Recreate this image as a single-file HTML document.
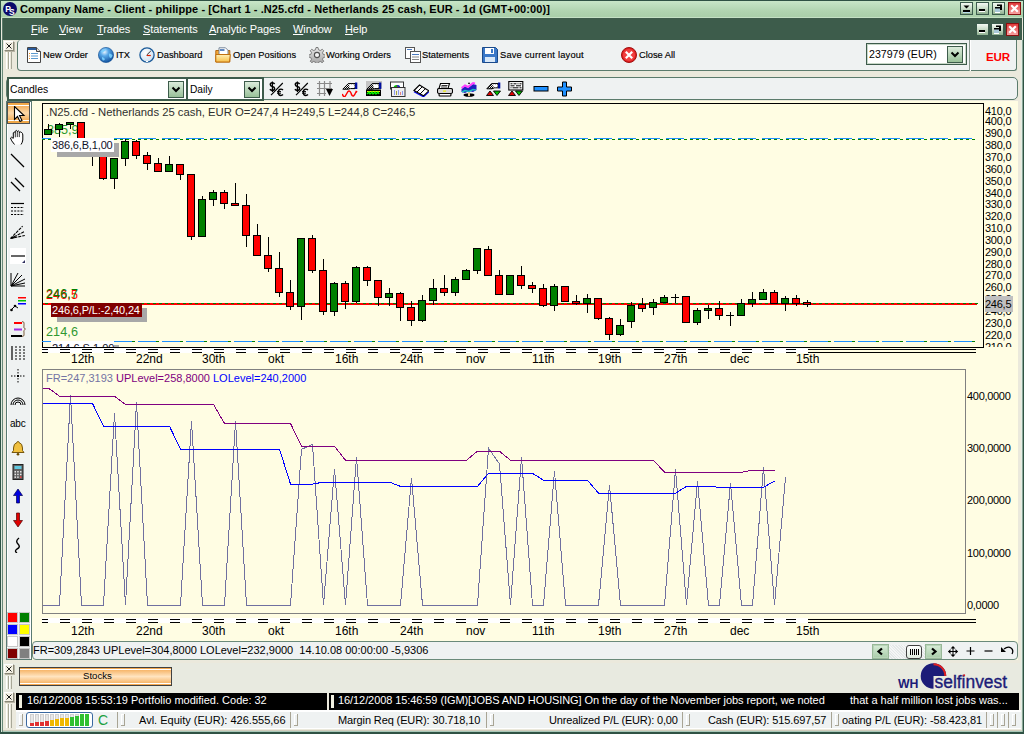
<!DOCTYPE html>
<html><head><meta charset="utf-8">
<style>
*{margin:0;padding:0;box-sizing:border-box}
html,body{width:1024px;height:734px;overflow:hidden;background:#ebe9dc;font-family:'Liberation Sans', sans-serif;color:#000}
.a{position:absolute}
.pl{position:absolute;left:985px;font-size:11px;line-height:14px;letter-spacing:-0.25px}
.pl2{position:absolute;left:967px;font-size:11px;line-height:14px;letter-spacing:-0.3px}
.xl{position:absolute;font-size:12px;line-height:12px}
.mn{position:absolute;top:22px;letter-spacing:-0.1px;color:#fff;font-size:11px;line-height:14px}
.mn u{text-decoration:underline}
.tb{position:absolute;top:48.6px;font-size:9.3px;line-height:13px;white-space:nowrap;-webkit-text-stroke:0.15px #000}
.t11{position:absolute;font-size:11px;line-height:14px;white-space:nowrap}
</style></head><body>
<!-- frame -->
<div class="a" style="left:0;top:0;width:1024px;height:1px;background:#2f5244"></div>
<div class="a" style="left:0;top:0;width:1px;height:734px;background:#2f5244"></div>
<div class="a" style="left:1px;top:40px;width:1px;height:694px;background:#dce8dc"></div>
<div class="a" style="left:2px;top:40px;width:1px;height:694px;background:#6a8a7a"></div>
<div class="a" style="left:1023px;top:0;width:1px;height:734px;background:#2f5244"></div>
<div class="a" style="left:1022px;top:40px;width:1px;height:694px;background:#8aa898"></div>
<div class="a" style="left:1021px;top:40px;width:1px;height:694px;background:#e4ece4"></div>
<div class="a" style="left:0;top:732px;width:1024px;height:2px;background:#2f5244"></div>
<div class="a" style="left:3px;top:731px;width:1019px;height:1px;background:#a8c8b8"></div>
<div class="a" style="left:3px;top:730px;width:1019px;height:1px;background:#d0ccbc"></div>
<!-- title -->
<div class="a" style="left:1px;top:1px;width:1022px;height:17px;background:linear-gradient(#c8e6c8,#b0d4b0 60%,#a8cea8)"></div>
<div class="a" style="left:1px;top:17px;width:1022px;height:1px;background:#c4e0c4"></div>
<div class="a" style="left:3px;top:2px;width:14px;height:14px;border-radius:50%;background:#0a0a6a"></div>
<svg class="a" style="left:3px;top:2px" width="14" height="14"><text x="2.2" y="9.5" font-family="Liberation Sans" font-weight="bold" font-size="8.5" fill="#fff">P</text><text x="6" y="12.5" font-family="Liberation Sans" font-weight="bold" font-size="8.5" fill="#fff">S</text></svg>
<div class="a" style="left:20px;top:3px;font:bold 11px 'Liberation Sans', sans-serif;line-height:13px;letter-spacing:0.09px;white-space:nowrap">Company Name - Client - philippe - [Chart 1 - .N25.cfd - Netherlands 25 cash, EUR - 1d (GMT+00:00)]</div>
<div class="a" style="left:960px;top:2px;width:13px;height:13px;background:linear-gradient(#f4faf4,#c8dcc8 50%,#8fb08f);border:1px solid #3b5b4d"><svg width="11" height="11" viewBox="0 0 11 11" style="position:absolute;left:0;top:0"><path d="M2.5,2.5 h6 l-3,3z" fill="#000"/><rect x="2" y="7" width="7" height="2" fill="#000"/><rect x="2" y="9" width="7" height="1" fill="#bde"/></svg></div><div class="a" style="left:976px;top:2px;width:13px;height:13px;background:linear-gradient(#f4faf4,#c8dcc8 50%,#8fb08f);border:1px solid #3b5b4d"><svg width="11" height="11" viewBox="0 0 11 11" style="position:absolute;left:0;top:0"><rect x="2" y="6" width="6" height="2" fill="#000"/><rect x="2" y="8" width="6" height="1" fill="#fff"/></svg></div><div class="a" style="left:992px;top:2px;width:13px;height:13px;background:linear-gradient(#f4faf4,#c8dcc8 50%,#8fb08f);border:1px solid #3b5b4d"><svg width="11" height="11" viewBox="0 0 11 11" style="position:absolute;left:0;top:0"><rect x="2" y="4" width="5" height="5" fill="#a8c8d8" stroke="#000" stroke-width="0"/><rect x="2" y="4" width="5" height="1.5" fill="#000"/><rect x="4" y="1.5" width="5" height="1.5" fill="#000"/><rect x="7" y="3" width="2" height="4" fill="#000"/><rect x="2" y="9" width="5" height="1" fill="#fff"/></svg></div><div class="a" style="left:1008px;top:2px;width:13px;height:13px;background:linear-gradient(#e03838,#f07878 60%,#f8a0a0);border:1px solid #8a1010"><svg width="11" height="11" viewBox="0 0 11 11" style="position:absolute;left:0;top:0"><path d="M2.2,2.2 L8.8,8.8 M8.8,2.2 L2.2,8.8" stroke="#fff" stroke-width="2.2"/></svg></div>
<!-- menu -->
<div class="a" style="left:2px;top:18px;width:1020px;height:22px;background:#3d5c4b;border-left:1px solid #5a7a6a"></div>
<span class="mn" style="left:31px"><u>F</u>ile</span><span class="mn" style="left:59px"><u>V</u>iew</span><span class="mn" style="left:97px"><u>T</u>rades</span><span class="mn" style="left:143px"><u>S</u>tatements</span><span class="mn" style="left:209px"><u>A</u>nalytic Pages</span><span class="mn" style="left:293px"><u>W</u>indow</span><span class="mn" style="left:345px"><u>H</u>elp</span>
<div class="a" style="left:976px;top:23px;width:13px;height:13px;background:linear-gradient(#f4faf4,#c8dcc8 50%,#8fb08f);border:1px solid #3b5b4d"><svg width="11" height="11" viewBox="0 0 11 11" style="position:absolute;left:0;top:0"><rect x="2" y="6" width="6" height="2" fill="#000"/><rect x="2" y="8" width="6" height="1" fill="#fff"/></svg></div><div class="a" style="left:991px;top:23px;width:13px;height:13px;background:linear-gradient(#f4faf4,#c8dcc8 50%,#8fb08f);border:1px solid #3b5b4d"><svg width="11" height="11" viewBox="0 0 11 11" style="position:absolute;left:0;top:0"><rect x="2" y="4" width="5" height="5" fill="#a8c8d8" stroke="#000" stroke-width="0"/><rect x="2" y="4" width="5" height="1.5" fill="#000"/><rect x="4" y="1.5" width="5" height="1.5" fill="#000"/><rect x="7" y="3" width="2" height="4" fill="#000"/><rect x="2" y="9" width="5" height="1" fill="#fff"/></svg></div><div class="a" style="left:1006px;top:23px;width:13px;height:13px;background:linear-gradient(#e03838,#f07878 60%,#f8a0a0);border:1px solid #8a1010"><svg width="11" height="11" viewBox="0 0 11 11" style="position:absolute;left:0;top:0"><path d="M2.2,2.2 L8.8,8.8 M8.8,2.2 L2.2,8.8" stroke="#fff" stroke-width="2.2"/></svg></div>
<!-- main toolbar -->
<div class="a" style="left:4px;top:41px;width:10px;height:10px;background:#f4f1e4;border:1px solid;border-color:#fff #8a8878 #8a8878 #fff;box-shadow:1px 1px #b8b4a4"><svg width="8" height="8" style="position:absolute;left:0;top:0"><path d="M1.5,1.5 L6.5,6.5 M6.5,1.5 L1.5,6.5" stroke="#000" stroke-width="0.9"/></svg></div><div class="a" style="left:6px;top:52px;width:3px;height:17px;border-left:1px solid #fff;border-right:1px solid #a8a898"></div><div class="a" style="left:9px;top:52px;width:3px;height:17px;border-left:1px solid #fff;border-right:1px solid #a8a898"></div>
<div class="a" style="left:17px;top:40px;width:953px;height:31px;background:#eff2f2;border:1px solid #5b7b6c;border-top:0;border-radius:4px 0 0 4px"></div>
<div class="a" style="left:970px;top:40px;width:47px;height:31px;background:#eff2f2;border:1px solid #5b7b6c;border-top:0;border-left:0;border-radius:0 0 3px 0"></div>
<div class="a" style="left:969px;top:40px;width:2px;height:31px;background:#fff;border-left:1px solid #8a9a90"></div>
<svg class="a" style="left:26px;top:47px" width="16" height="16" viewBox="0 0 16 16"><path d="M1.5,0.5 h9 l4,4 v11 h-13 z" fill="#fff" stroke="#444"/>
<path d="M10.5,0.5 v4 h4" fill="#ddd" stroke="#444"/>
<rect x="2" y="1" width="8" height="2" fill="#2a5a9a"/>
<rect x="5" y="6" width="7" height="1" fill="#5a9ad0"/><rect x="5" y="8.5" width="7" height="1" fill="#5a9ad0"/>
<rect x="5" y="11" width="7" height="1" fill="#5a9ad0"/><rect x="3" y="6" width="1" height="1" fill="#f09020"/>
<rect x="3" y="8.5" width="1" height="1" fill="#f09020"/><rect x="3" y="11" width="1" height="1" fill="#f09020"/></svg><svg class="a" style="left:98px;top:47px" width="16" height="16" viewBox="0 0 16 16"><defs><radialGradient id="gl" cx="0.4" cy="0.3" r="0.75"><stop offset="0" stop-color="#e8f4ff"/><stop offset="0.35" stop-color="#58a8e8"/><stop offset="1" stop-color="#0a4a98"/></radialGradient></defs><circle cx="8" cy="8" r="7.6" fill="url(#gl)" stroke="#0a4a90" stroke-width="0.6"/><path d="M3,4.5 q2,-2.5 5,-2 q-1,2 -3,2.5 q-1,1.5 -2,-0.5z M11,6.5 q2.5,0 3.5,2 q-0.5,2.5 -2.5,2.5 q-1.5,-2 -1,-4.5z M4,10 q2,0.5 3,2 q-0.5,1.5 -2,1.5 q-1.5,-1.5 -1,-3.5z" fill="#7ad0ff" opacity="0.9"/></svg><svg class="a" style="left:139px;top:47px" width="16" height="16" viewBox="0 0 16 16"><defs><radialGradient id="dg" cx="0.4" cy="0.35" r="0.7"><stop offset="0" stop-color="#ffffff"/><stop offset="1" stop-color="#c8ddf0"/></radialGradient></defs><circle cx="8" cy="8" r="7.1" fill="url(#dg)" stroke="#1a5a98" stroke-width="1.3"/><path d="M7.7,8 L11.8,4" stroke="#303030" stroke-width="1"/><path d="M7.7,8.5 H11.8" stroke="#e02000" stroke-width="1.2"/><rect x="7" y="14" width="2" height="1" fill="#fff"/></svg><svg class="a" style="left:215px;top:47px" width="16" height="16" viewBox="0 0 16 16"><defs><linearGradient id="fg" x1="0" y1="0" x2="0" y2="1"><stop offset="0" stop-color="#fff0b8"/><stop offset="1" stop-color="#f8c048"/></linearGradient></defs><path d="M0.8,3.5 h4 l1.5,-1.5 h4 v1.5 h4.5 v11.5 h-14 z" fill="#f4a838" stroke="#b86a10" stroke-width="1"/><path d="M4,0.8 h6.5 l2.5,2.5 v5.5 h-9 z" fill="#fff" stroke="#6a7a90" stroke-width="0.9"/><rect x="5" y="2.2" width="4.5" height="1.6" fill="#3a6ab0"/><path d="M0.8,7.5 h14.5 l-0.8,7.5 h-13.7 z" fill="url(#fg)" stroke="#c07010" stroke-width="1"/></svg><svg class="a" style="left:309px;top:47px" width="16" height="16" viewBox="0 0 16 16"><defs><linearGradient id="gg" x1="0" y1="0" x2="0" y2="1"><stop offset="0" stop-color="#e8e8e8"/><stop offset="1" stop-color="#a0a0a0"/></linearGradient></defs><g fill="url(#gg)" stroke="#707070" stroke-width="0.9"><path d="M7,0.5h2l0.5,2.2 1.8,0.8 2-1.2 1.4,1.4 -1.2,2 0.8,1.8 2.2,0.5v2l-2.2,0.5 -0.8,1.8 1.2,2 -1.4,1.4 -2,-1.2 -1.8,0.8 -0.5,2.2h-2l-0.5,-2.2 -1.8,-0.8 -2,1.2 -1.4,-1.4 1.2,-2 -0.8,-1.8 -2.2,-0.5v-2l2.2,-0.5 0.8,-1.8 -1.2,-2 1.4,-1.4 2,1.2 1.8,-0.8z"/></g><circle cx="8" cy="8" r="2.6" fill="#f4f4f4" stroke="#505050" stroke-width="1.1"/></svg><svg class="a" style="left:405px;top:47px" width="16" height="16" viewBox="0 0 16 16"><rect x="0.5" y="0.5" width="9" height="11" fill="#fff" stroke="#555"/><rect x="5.5" y="4.5" width="10" height="11" fill="#fff" stroke="#555"/>
<rect x="2" y="2" width="5" height="1" fill="#4a7ac0"/><rect x="7" y="7" width="7" height="1" fill="#4a7ac0"/><rect x="7" y="9.5" width="7" height="1" fill="#888"/><rect x="7" y="12" width="7" height="1" fill="#888"/></svg><svg class="a" style="left:482px;top:47px" width="16" height="16" viewBox="0 0 16 16"><path d="M0.5,0.5 h13 l2,2 v13 h-15 z" fill="#3a78c8" stroke="#1a4a8a"/><rect x="3" y="1" width="9" height="6" fill="#fff"/><rect x="9" y="2" width="2" height="4" fill="#3a78c8"/><rect x="3" y="10" width="10" height="5" fill="#d8e8f8"/></svg><svg class="a" style="left:621px;top:47px" width="16" height="16" viewBox="0 0 16 16"><circle cx="8" cy="8" r="7.5" fill="#e02020" stroke="#a01010"/><circle cx="8" cy="8" r="6" fill="#f04040"/><path d="M4.8,4.8 L11.2,11.2 M11.2,4.8 L4.8,11.2" stroke="#fff" stroke-width="2.2"/></svg>
<div class="tb" style="left:43px">New Order</div>
<div class="tb" style="left:116px;letter-spacing:-0.3px">ITX</div>
<div class="tb" style="left:157px">Dashboard</div>
<div class="tb" style="left:233px">Open Positions</div>
<div class="tb" style="left:326px">Working Orders</div>
<div class="tb" style="left:422px">Statements</div>
<div class="tb" style="left:500px;letter-spacing:0.2px">Save current layout</div>
<div class="tb" style="left:639px">Close All</div>
<div class="a" style="left:866px;top:43px;width:101px;height:22px;border:1px solid #3d5b4b;box-shadow:inset 0 0 0 1px #c8d8c8;background:#fff"></div>
<div class="t11" style="left:869px;top:47px;font-size:10.6px">237979 (EUR)</div>
<div class="a" style="left:947px;top:46px;width:16px;height:17px;background:linear-gradient(#dcecdc,#98c098);border:1px solid #3d5b4b"><svg width="14" height="15" style="position:absolute;left:0;top:0"><path d="M3.5,5.5 L7,9 L10.5,5.5" fill="none" stroke="#000" stroke-width="2"/></svg></div>
<div class="a" style="left:986px;top:50px;font:bold 11.6px 'Liberation Sans', sans-serif;line-height:13px;color:#f00;letter-spacing:-0.2px">EUR</div>
<!-- chart toolbar -->
<div class="a" style="left:6px;top:77px;width:1012px;height:23px;background:#eff2f2;border:1px solid #5b7b6c;border-radius:5px"></div>
<div class="a" style="left:7px;top:77px;width:181px;height:24px;border:2px solid #3d5b4b;background:#fff"></div>
<div class="a" style="left:186px;top:77px;width:78px;height:24px;border:2px solid #3d5b4b;background:#fff"></div>
<div class="t11" style="left:10px;top:83px;font-size:10.4px">Candles</div>
<div class="t11" style="left:190px;top:83px;font-size:10.2px">Daily</div>
<div class="a" style="left:168px;top:81px;width:16px;height:17px;background:linear-gradient(#dcecdc,#98c098);border:1px solid #3d5b4b"><svg width="14" height="15" style="position:absolute;left:0;top:0"><path d="M3.5,5.5 L7,9 L10.5,5.5" fill="none" stroke="#000" stroke-width="2"/></svg></div><div class="a" style="left:244px;top:81px;width:16px;height:17px;background:linear-gradient(#dcecdc,#98c098);border:1px solid #3d5b4b"><svg width="14" height="15" style="position:absolute;left:0;top:0"><path d="M3.5,5.5 L7,9 L10.5,5.5" fill="none" stroke="#000" stroke-width="2"/></svg></div>
<svg class="a" style="left:269px;top:81px" width="16" height="16" viewBox="0 0 16 16"><path d="M5.6,3 q-0.8,-1.2 -2.3,-1.2 q-2,0 -2,1.8 q0,1.5 2.1,1.9 q2.2,0.4 2.2,2 q0,1.9 -2.2,1.9 q-1.6,0 -2.5,-1.1" fill="none" stroke="#000" stroke-width="1.5"/><path d="M3.4,0.5 v10.5" stroke="#000" stroke-width="1.2"/><path d="M2,14.2 L13.8,2" stroke="#000" stroke-width="1.1"/><path d="M14,9 q-0.9,-0.9 -2.1,-0.9 q-2.6,0 -2.6,3.2 q0,3.2 2.6,3.2 q1.2,0 2.1,-0.9" fill="none" stroke="#000" stroke-width="1.4"/><path d="M8,10.6 h4 M8,12.2 h4" stroke="#000" stroke-width="1"/></svg><svg class="a" style="left:294px;top:81px" width="16" height="16" viewBox="0 0 16 16"><path d="M5.6,3 q-0.8,-1.2 -2.3,-1.2 q-2,0 -2,1.8 q0,1.5 2.1,1.9 q2.2,0.4 2.2,2 q0,1.9 -2.2,1.9 q-1.6,0 -2.5,-1.1" fill="none" stroke="#000" stroke-width="1.5"/><path d="M3.4,0.5 v10.5" stroke="#000" stroke-width="1.2"/><path d="M2,14.2 L13.8,2" stroke="#000" stroke-width="1.1"/><path d="M14,9 q-0.9,-0.9 -2.1,-0.9 q-2.6,0 -2.6,3.2 q0,3.2 2.6,3.2 q1.2,0 2.1,-0.9" fill="none" stroke="#000" stroke-width="1.4"/><path d="M8,10.6 h4 M8,12.2 h4" stroke="#000" stroke-width="1"/></svg><svg class="a" style="left:317px;top:81px" width="16" height="16" viewBox="0 0 16 16"><path d="M2.5,0v15 M7.5,0v15 M13,0v9 M0,2.5h15 M0,7.5h15 M0,12.5h9" stroke="#8a8a8a" stroke-width="1.2"/><path d="M9,8 h7 l-3.5,7 z" fill="#000"/></svg><svg class="a" style="left:342px;top:81px" width="16" height="16" viewBox="0 0 16 16"><defs><pattern id="chk" width="2" height="2" patternUnits="userSpaceOnUse"><rect width="1" height="1" fill="#000"/><rect x="1" y="1" width="1" height="1" fill="#000"/></pattern></defs><path d="M0.8,8.2 L6.3,2.6 H13 V7.6 H8.5 L6,8.2 Z" fill="url(#chk)" stroke="#000" stroke-width="1"/><path d="M6.5,3.2 H12.5 V7 H8 Z" fill="#fff"/><rect x="13" y="1.5" width="2.3" height="6.5" fill="#0010a0"/><path d="M0.3,13 Q1.5,16.5 3,15.5 Q4.5,13 6,10.5 Q7.5,9 9,12 Q10,15.5 11.5,15 Q13,13.5 14.2,10.5 L15.2,11" fill="none" stroke="#f00" stroke-width="1.4"/></svg><svg class="a" style="left:366px;top:81px" width="16" height="16" viewBox="0 0 16 16"><rect x="0" y="0" width="16" height="7.5" fill="#c4c4c4"/><path d="M0.8,8.2 L6.3,2.6 H13 V7.6 H8.5 L6,8.2 Z" fill="url(#chk)" stroke="#000" stroke-width="1"/><path d="M6.5,3.2 H12.5 V7 H8 Z" fill="#fff"/><rect x="13" y="1.5" width="2.3" height="6.5" fill="#0010a0"/><rect x="0" y="8.5" width="15" height="6.5" fill="#000"/><path d="M1,10.5 h13" stroke="#f0f000" stroke-width="1"/><path d="M1,13 l2,-2 l1,2 l2,-2 l1,2 l2,-2 l1,2 l2,-2 l1,2" fill="none" stroke="#00ff00" stroke-width="1.3"/></svg><svg class="a" style="left:390px;top:81px" width="16" height="16" viewBox="0 0 16 16"><rect x="0.5" y="1" width="13" height="7" fill="#fff" stroke="#333" stroke-width="1"/><path d="M3.5,7.5 a3.4,3.4 0 0,1 6.8,0 z" fill="#00c000"/><path d="M6.9,4.1 a3.4,3.4 0 0,1 3.4,3.4 h-3.4z" fill="#2020e0"/><path d="M6.9,4.1 v3.4 h1.5 z" fill="#e02020"/><rect x="1.5" y="6.5" width="13.5" height="9" fill="#eee" stroke="#333" stroke-width="1"/><rect x="4" y="9" width="1" height="5" fill="#8a9af0"/><rect x="6" y="10" width="1" height="4" fill="#a0a040"/><rect x="8" y="9" width="1" height="5" fill="#8a9af0"/><rect x="10" y="11" width="1" height="3" fill="#e08080"/><rect x="12" y="10" width="1" height="4" fill="#8a9af0"/></svg><svg class="a" style="left:413px;top:81px" width="16" height="16" viewBox="0 0 16 16"><path d="M1,10.8 L10.5,15.8 L15.8,10.8" fill="none" stroke="#0000ff" stroke-width="1.2"/><path d="M1,9.5 L6.5,4 L15.8,9.8 L10.5,14.8 Z" fill="#fff" stroke="#000" stroke-width="1.1"/><path d="M3.8,11.2 L9.2,5.8 M7,13 L12.5,7.6" stroke="#000" stroke-width="1"/></svg><svg class="a" style="left:437px;top:81px" width="16" height="16" viewBox="0 0 16 16"><path d="M3.5,2.5 h9 l-1.5,5 h-9 z" fill="#fff" stroke="#000" stroke-width="1.1"/><path d="M4.5,4.5 h6 M4,6 h6" stroke="#000" stroke-width="0.8"/><rect x="0.5" y="7.5" width="15" height="5" rx="1.5" fill="#d8d8d8" stroke="#000" stroke-width="1.1"/><rect x="6" y="9.5" width="3" height="1.2" fill="#f0f000"/><rect x="2" y="12.5" width="12" height="2.5" rx="1" fill="#fff" stroke="#000" stroke-width="1.1"/></svg><svg class="a" style="left:461px;top:81px" width="16" height="16" viewBox="0 0 16 16"><path d="M8,1 l-1,2 h2z" fill="#000"/><ellipse cx="8" cy="14" rx="5.5" ry="1.8" fill="#000"/><rect x="7" y="11" width="2" height="4" fill="#e8c890"/><path d="M0.5,8 L4,5 L7,7 L12,3 L15.5,4 V9 L12,11 L8,10 L4,12 L0.5,11 Z" fill="#2020c0"/><path d="M0.5,7 L4,4.5 L7,6 L12,2 L14,2.5" fill="none" stroke="#ff40ff" stroke-width="2"/><path d="M1,11 L4,9.5 L8,10.5 L12,8.5 L15,9" fill="none" stroke="#20c0c0" stroke-width="1.5"/></svg><svg width="0" height="0" style="position:absolute"><defs><pattern id="chk" width="2" height="2" patternUnits="userSpaceOnUse"><rect width="1" height="1" fill="#000"/><rect x="1" y="1" width="1" height="1" fill="#000"/></pattern></defs></svg><svg class="a" style="left:486px;top:81px" width="16" height="16" viewBox="0 0 16 16"><path d="M0.8,7.8 L5.5,2.6 H12 V6.8 H8.5 L6,7.8 Z" fill="url(#chk)" stroke="#000" stroke-width="1"/><path d="M5.8,3.2 H11.5 V6.3 H8 Z" fill="#fff"/><rect x="12" y="1.5" width="2.3" height="6" fill="#0010a0"/><path d="M0.5,14.5 L4,10 L7.5,14.5 Z" fill="#e00000" stroke="#000" stroke-width="0.9"/><path d="M7.5,10 H14.5 L11,14.5 Z" fill="#00c000" stroke="#000" stroke-width="0.9"/></svg><svg class="a" style="left:508px;top:81px" width="16" height="16" viewBox="0 0 16 16"><rect x="0.8" y="0.5" width="14" height="8.5" fill="#fff" stroke="#000" stroke-width="1.1"/><path d="M2.5,2.8 h2 M5.5,2.8 h3 M9.5,2.8 h1 M11.5,2.8 h2 M2.5,4.8 h4 M8,4.8 h5 M2.5,6.8 h1 M4.5,6.8 h6 M11.5,6.8 h2" stroke="#000" stroke-width="1"/><path d="M0.5,14.5 L4,10 L7.5,14.5 Z" fill="#e00000" stroke="#000" stroke-width="0.9"/><path d="M7.5,10 H14.5 L11,14.5 Z" fill="#00c000" stroke="#000" stroke-width="0.9"/></svg><svg class="a" style="left:533px;top:81px" width="16" height="16" viewBox="0 0 16 16"><rect x="1" y="5.5" width="14" height="4.5" fill="#1e90ff" stroke="#000" stroke-width="1"/></svg><svg class="a" style="left:557px;top:81px" width="16" height="16" viewBox="0 0 16 16"><path d="M5.5,1 h4 v5 h5 v4 h-5 v5 h-4 v-5 h-5 v-4 h5 z" fill="#1e90ff" stroke="#000" stroke-width="1"/></svg>
<!-- chart bg -->
<div class="a" style="left:31px;top:101px;width:987px;height:559px;background:#fffde3"></div>
<div class="a" style="left:6px;top:101px;width:26px;height:559px;background:#eff2f2;border:1px solid #5a7a72;box-shadow:inset 1px 0 #fff,inset -1px 0 #fff"></div>
<div class="a" style="left:7px;top:102px;width:23px;height:22px;background:linear-gradient(#f0a040,#fcd8a8 50%,#f0a040);border:1px solid #505050;box-shadow:inset 0 2px #f0a848,inset 0 3px #fff,inset 0 -2px #f0a848,inset 0 -3px #fff"></div>
<svg class="a" style="left:10px;top:106px" width="16" height="16" viewBox="0 0 16 16"><path d="M4.5,0.5 V13.5 L7.5,10.5 L10,15.5 L12,14.5 L9.5,9.5 H14 Z" fill="#fff" stroke="#000" stroke-width="1.1"/></svg><svg class="a" style="left:10px;top:129px" width="16" height="16" viewBox="0 0 16 16"><path d="M4.5,15.5 Q1,11.5 0.5,9 Q1,7.3 3.3,9.3 V3.8 Q4.3,2.3 5.3,3.8 V2.2 Q6.3,0.7 7.3,2.2 V2.6 Q8.3,1.1 9.3,2.6 V3.6 Q10.3,2.3 11.8,3.6 Q12.8,4.5 12.8,6 V11 Q12.3,14 11,15.5" fill="#fff" stroke="#000" stroke-width="1"/><path d="M5.3,3.8v4.5 M7.3,2.6v5.5 M9.3,3.6v4.5" stroke="#000" stroke-width="0.8"/></svg><svg class="a" style="left:10px;top:153px" width="16" height="16" viewBox="0 0 16 16"><path d="M1,1 L14,14" stroke="#000" stroke-width="1.3"/></svg><svg class="a" style="left:10px;top:177px" width="16" height="16" viewBox="0 0 16 16"><path d="M1,5 L10,14 M5,1 L14,10" stroke="#000" stroke-width="1.3"/></svg><svg class="a" style="left:10px;top:201px" width="16" height="16" viewBox="0 0 16 16"><path d="M1,2.5h13" stroke="#000" stroke-width="1.2"/><path d="M1,6.5h13 M1,10h13 M1,13.5h13" stroke="#000" stroke-width="1" stroke-dasharray="2,1.2"/></svg><svg class="a" style="left:10px;top:225px" width="16" height="16" viewBox="0 0 16 16"><path d="M0.5,13.5 L12.6,1.1 M0.5,13.5 L14.8,6.4 M0.5,13.5 L14.8,10.5" stroke="#000" stroke-width="1.1" stroke-dasharray="3,1"/><path d="M0,14 l4,-3 l1,2 z" fill="#000"/></svg><svg class="a" style="left:10px;top:248px" width="16" height="16" viewBox="0 0 16 16"><rect x="0" y="0" width="16" height="16" fill="#fff"/><path d="M1,8h14" stroke="#000" stroke-width="1.2"/><path d="M12,15 l3,-3 v3z" fill="#303060"/></svg><svg class="a" style="left:10px;top:272px" width="16" height="16" viewBox="0 0 16 16"><path d="M1,14 L8,1 M1,14 L12,3 M1,14 L15,7 M1,14 L15,11 M1,14 L15,14 M1,1 V14" stroke="#000" stroke-width="1"/></svg><svg class="a" style="left:10px;top:296px" width="16" height="16" viewBox="0 0 16 16"><rect x="8" y="1" width="8" height="1.5" fill="#f00"/><rect x="8" y="4" width="8" height="1.5" fill="#00c000"/><rect x="8" y="7" width="8" height="1.5" fill="#00f"/><path d="M1,14 l4,-4 l3,2" stroke="#000" fill="none"/><circle cx="1.5" cy="14" r="1.3"/><circle cx="5" cy="10" r="1.3"/></svg><svg class="a" style="left:10px;top:321px" width="16" height="16" viewBox="0 0 16 16"><rect x="4" y="1" width="8" height="2" fill="#f00"/><rect x="4" y="7.5" width="8" height="2" fill="#a030e0"/><rect x="1" y="14" width="11" height="2" fill="#000"/><path d="M12,0.5 q3,0 2,3.5 q-1,3.5 1.5,4 q-2.5,1 -1.5,4 q1,3.5 -2,3.5" fill="none" stroke="#806040"/></svg><svg class="a" style="left:10px;top:345px" width="16" height="16" viewBox="0 0 16 16"><path d="M2,1v14" stroke="#000" stroke-width="1.2"/><path d="M6,1v14 M10,1v14 M14,1v14" stroke="#000" stroke-dasharray="2,1"/></svg><svg class="a" style="left:10px;top:368px" width="16" height="16" viewBox="0 0 16 16"><path d="M8,1v14 M1,8h14" stroke="#000" stroke-dasharray="1.5,1.5"/><rect x="7" y="7" width="2" height="2"/></svg><svg class="a" style="left:10px;top:393px" width="16" height="16" viewBox="0 0 16 16"><path d="M1,12 a7,7 0 0,1 14,0 M3,12 a5,5 0 0,1 10,0 M5,12 a3,3 0 0,1 6,0" fill="none" stroke="#000" stroke-width="1"/></svg><svg class="a" style="left:10px;top:440px" width="16" height="16" viewBox="0 0 16 16"><path d="M8,1.5 q1,0 1,1 q3.5,1 3.5,5.5 v2.5 l1.5,2 h-12 l1.5,-2 v-2.5 q0,-4.5 3.5,-5.5 q0,-1 1,-1z" fill="#f0c040" stroke="#6a4a00" stroke-width="0.9"/><circle cx="8" cy="14.2" r="1.3" fill="#6a4a00"/></svg><svg class="a" style="left:10px;top:464px" width="16" height="16" viewBox="0 0 16 16"><rect x="3" y="0.5" width="10" height="15" fill="#606060" stroke="#202020"/><rect x="4.5" y="2" width="7" height="3" fill="#60c8e0"/><g fill="#e8e8e8"><rect x="4.5" y="7" width="1.5" height="1.5"/><rect x="7.2" y="7" width="1.5" height="1.5"/><rect x="10" y="7" width="1.5" height="1.5"/><rect x="4.5" y="9.7" width="1.5" height="1.5"/><rect x="7.2" y="9.7" width="1.5" height="1.5"/><rect x="10" y="9.7" width="1.5" height="1.5"/><rect x="4.5" y="12.4" width="1.5" height="1.5"/><rect x="7.2" y="12.4" width="1.5" height="1.5"/></g><rect x="10" y="12.4" width="1.5" height="1.5" fill="#f44"/></svg><svg class="a" style="left:10px;top:488px" width="16" height="16" viewBox="0 0 16 16"><path d="M8,1 l4.5,6.5 h-3 v7.5 h-3 v-7.5 h-3z" fill="#0000e0" stroke="#000050" stroke-width="0.7"/></svg><svg class="a" style="left:10px;top:512px" width="16" height="16" viewBox="0 0 16 16"><path d="M8,15 l4.5,-6.5 h-3 v-7.5 h-3 v7.5 h-3z" fill="#e00000" stroke="#500000" stroke-width="0.7"/></svg><svg class="a" style="left:10px;top:537px" width="16" height="16" viewBox="0 0 16 16"><path d="M9,1 q-4,3 -1,6 q3,3 -1,5 q-3,2 0,4" fill="none" stroke="#000" stroke-width="1.4"/></svg><div class="a" style="left:10px;top:418px;font-size:10px;line-height:12px;letter-spacing:-0.2px;color:#000">abc</div><div class="a" style="left:7px;top:612px;width:11px;height:11px;background:#ff0000;border:1px solid #c8c8c8"></div><div class="a" style="left:19px;top:612px;width:11px;height:11px;background:#008000;border:1px solid #c8c8c8"></div><div class="a" style="left:7px;top:624px;width:11px;height:11px;background:#0000ff;border:1px solid #c8c8c8"></div><div class="a" style="left:19px;top:624px;width:11px;height:11px;background:#ffff00;border:1px solid #c8c8c8"></div><div class="a" style="left:7px;top:636px;width:11px;height:11px;background:#ffffff;border:1px solid #c8c8c8"></div><div class="a" style="left:19px;top:636px;width:11px;height:11px;background:#000000;border:1px solid #c8c8c8"></div><div class="a" style="left:7px;top:648px;width:11px;height:11px;background:#800000;border:1px solid #c8c8c8"></div><div class="a" style="left:19px;top:648px;width:11px;height:11px;background:#808080;border:1px solid #c8c8c8"></div>
<svg class="a" style="left:0;top:0" width="1024" height="734" shape-rendering="crispEdges">
<rect x="42" y="103" width="942" height="1" fill="#000"/><rect x="42" y="103" width="1" height="245" fill="#000"/><rect x="983" y="103" width="1" height="245" fill="#000"/><rect x="42" y="347" width="942" height="1" fill="#000"/>
<text x="47" y="134" font-family="Liberation Sans" font-size="12.6" fill="#2a9a2a">385,9</text>
<rect x="42" y="138" width="18" height="1" fill="#1e90ff"/><rect x="42" y="139" width="3" height="1" fill="#008000"/><rect x="48" y="139" width="3" height="1" fill="#008000"/><rect x="54" y="139" width="3" height="1" fill="#008000"/><rect x="60" y="139" width="3" height="1" fill="#008000"/><rect x="66" y="138" width="18" height="1" fill="#1e90ff"/><rect x="66" y="139" width="3" height="1" fill="#008000"/><rect x="72" y="139" width="3" height="1" fill="#008000"/><rect x="78" y="139" width="3" height="1" fill="#008000"/><rect x="84" y="139" width="3" height="1" fill="#008000"/><rect x="90" y="138" width="18" height="1" fill="#1e90ff"/><rect x="90" y="139" width="3" height="1" fill="#008000"/><rect x="96" y="139" width="3" height="1" fill="#008000"/><rect x="102" y="139" width="3" height="1" fill="#008000"/><rect x="108" y="139" width="3" height="1" fill="#008000"/><rect x="114" y="138" width="18" height="1" fill="#1e90ff"/><rect x="114" y="139" width="3" height="1" fill="#008000"/><rect x="120" y="139" width="3" height="1" fill="#008000"/><rect x="126" y="139" width="3" height="1" fill="#008000"/><rect x="132" y="139" width="3" height="1" fill="#008000"/><rect x="138" y="138" width="18" height="1" fill="#1e90ff"/><rect x="138" y="139" width="3" height="1" fill="#008000"/><rect x="144" y="139" width="3" height="1" fill="#008000"/><rect x="150" y="139" width="3" height="1" fill="#008000"/><rect x="156" y="139" width="3" height="1" fill="#008000"/><rect x="162" y="138" width="18" height="1" fill="#1e90ff"/><rect x="162" y="139" width="3" height="1" fill="#008000"/><rect x="168" y="139" width="3" height="1" fill="#008000"/><rect x="174" y="139" width="3" height="1" fill="#008000"/><rect x="180" y="139" width="3" height="1" fill="#008000"/><rect x="186" y="138" width="18" height="1" fill="#1e90ff"/><rect x="186" y="139" width="3" height="1" fill="#008000"/><rect x="192" y="139" width="3" height="1" fill="#008000"/><rect x="198" y="139" width="3" height="1" fill="#008000"/><rect x="204" y="139" width="3" height="1" fill="#008000"/><rect x="210" y="138" width="18" height="1" fill="#1e90ff"/><rect x="210" y="139" width="3" height="1" fill="#008000"/><rect x="216" y="139" width="3" height="1" fill="#008000"/><rect x="222" y="139" width="3" height="1" fill="#008000"/><rect x="228" y="139" width="3" height="1" fill="#008000"/><rect x="234" y="138" width="18" height="1" fill="#1e90ff"/><rect x="234" y="139" width="3" height="1" fill="#008000"/><rect x="240" y="139" width="3" height="1" fill="#008000"/><rect x="246" y="139" width="3" height="1" fill="#008000"/><rect x="252" y="139" width="3" height="1" fill="#008000"/><rect x="258" y="138" width="18" height="1" fill="#1e90ff"/><rect x="258" y="139" width="3" height="1" fill="#008000"/><rect x="264" y="139" width="3" height="1" fill="#008000"/><rect x="270" y="139" width="3" height="1" fill="#008000"/><rect x="276" y="139" width="3" height="1" fill="#008000"/><rect x="282" y="138" width="18" height="1" fill="#1e90ff"/><rect x="282" y="139" width="3" height="1" fill="#008000"/><rect x="288" y="139" width="3" height="1" fill="#008000"/><rect x="294" y="139" width="3" height="1" fill="#008000"/><rect x="300" y="139" width="3" height="1" fill="#008000"/><rect x="306" y="138" width="18" height="1" fill="#1e90ff"/><rect x="306" y="139" width="3" height="1" fill="#008000"/><rect x="312" y="139" width="3" height="1" fill="#008000"/><rect x="318" y="139" width="3" height="1" fill="#008000"/><rect x="324" y="139" width="3" height="1" fill="#008000"/><rect x="330" y="138" width="18" height="1" fill="#1e90ff"/><rect x="330" y="139" width="3" height="1" fill="#008000"/><rect x="336" y="139" width="3" height="1" fill="#008000"/><rect x="342" y="139" width="3" height="1" fill="#008000"/><rect x="348" y="139" width="3" height="1" fill="#008000"/><rect x="354" y="138" width="18" height="1" fill="#1e90ff"/><rect x="354" y="139" width="3" height="1" fill="#008000"/><rect x="360" y="139" width="3" height="1" fill="#008000"/><rect x="366" y="139" width="3" height="1" fill="#008000"/><rect x="372" y="139" width="3" height="1" fill="#008000"/><rect x="378" y="138" width="18" height="1" fill="#1e90ff"/><rect x="378" y="139" width="3" height="1" fill="#008000"/><rect x="384" y="139" width="3" height="1" fill="#008000"/><rect x="390" y="139" width="3" height="1" fill="#008000"/><rect x="396" y="139" width="3" height="1" fill="#008000"/><rect x="402" y="138" width="18" height="1" fill="#1e90ff"/><rect x="402" y="139" width="3" height="1" fill="#008000"/><rect x="408" y="139" width="3" height="1" fill="#008000"/><rect x="414" y="139" width="3" height="1" fill="#008000"/><rect x="420" y="139" width="3" height="1" fill="#008000"/><rect x="426" y="138" width="18" height="1" fill="#1e90ff"/><rect x="426" y="139" width="3" height="1" fill="#008000"/><rect x="432" y="139" width="3" height="1" fill="#008000"/><rect x="438" y="139" width="3" height="1" fill="#008000"/><rect x="444" y="139" width="3" height="1" fill="#008000"/><rect x="450" y="138" width="18" height="1" fill="#1e90ff"/><rect x="450" y="139" width="3" height="1" fill="#008000"/><rect x="456" y="139" width="3" height="1" fill="#008000"/><rect x="462" y="139" width="3" height="1" fill="#008000"/><rect x="468" y="139" width="3" height="1" fill="#008000"/><rect x="474" y="138" width="18" height="1" fill="#1e90ff"/><rect x="474" y="139" width="3" height="1" fill="#008000"/><rect x="480" y="139" width="3" height="1" fill="#008000"/><rect x="486" y="139" width="3" height="1" fill="#008000"/><rect x="492" y="139" width="3" height="1" fill="#008000"/><rect x="498" y="138" width="18" height="1" fill="#1e90ff"/><rect x="498" y="139" width="3" height="1" fill="#008000"/><rect x="504" y="139" width="3" height="1" fill="#008000"/><rect x="510" y="139" width="3" height="1" fill="#008000"/><rect x="516" y="139" width="3" height="1" fill="#008000"/><rect x="522" y="138" width="18" height="1" fill="#1e90ff"/><rect x="522" y="139" width="3" height="1" fill="#008000"/><rect x="528" y="139" width="3" height="1" fill="#008000"/><rect x="534" y="139" width="3" height="1" fill="#008000"/><rect x="540" y="139" width="3" height="1" fill="#008000"/><rect x="546" y="138" width="18" height="1" fill="#1e90ff"/><rect x="546" y="139" width="3" height="1" fill="#008000"/><rect x="552" y="139" width="3" height="1" fill="#008000"/><rect x="558" y="139" width="3" height="1" fill="#008000"/><rect x="564" y="139" width="3" height="1" fill="#008000"/><rect x="570" y="138" width="18" height="1" fill="#1e90ff"/><rect x="570" y="139" width="3" height="1" fill="#008000"/><rect x="576" y="139" width="3" height="1" fill="#008000"/><rect x="582" y="139" width="3" height="1" fill="#008000"/><rect x="588" y="139" width="3" height="1" fill="#008000"/><rect x="594" y="138" width="18" height="1" fill="#1e90ff"/><rect x="594" y="139" width="3" height="1" fill="#008000"/><rect x="600" y="139" width="3" height="1" fill="#008000"/><rect x="606" y="139" width="3" height="1" fill="#008000"/><rect x="612" y="139" width="3" height="1" fill="#008000"/><rect x="618" y="138" width="18" height="1" fill="#1e90ff"/><rect x="618" y="139" width="3" height="1" fill="#008000"/><rect x="624" y="139" width="3" height="1" fill="#008000"/><rect x="630" y="139" width="3" height="1" fill="#008000"/><rect x="636" y="139" width="3" height="1" fill="#008000"/><rect x="642" y="138" width="18" height="1" fill="#1e90ff"/><rect x="642" y="139" width="3" height="1" fill="#008000"/><rect x="648" y="139" width="3" height="1" fill="#008000"/><rect x="654" y="139" width="3" height="1" fill="#008000"/><rect x="660" y="139" width="3" height="1" fill="#008000"/><rect x="666" y="138" width="18" height="1" fill="#1e90ff"/><rect x="666" y="139" width="3" height="1" fill="#008000"/><rect x="672" y="139" width="3" height="1" fill="#008000"/><rect x="678" y="139" width="3" height="1" fill="#008000"/><rect x="684" y="139" width="3" height="1" fill="#008000"/><rect x="690" y="138" width="18" height="1" fill="#1e90ff"/><rect x="690" y="139" width="3" height="1" fill="#008000"/><rect x="696" y="139" width="3" height="1" fill="#008000"/><rect x="702" y="139" width="3" height="1" fill="#008000"/><rect x="708" y="139" width="3" height="1" fill="#008000"/><rect x="714" y="138" width="18" height="1" fill="#1e90ff"/><rect x="714" y="139" width="3" height="1" fill="#008000"/><rect x="720" y="139" width="3" height="1" fill="#008000"/><rect x="726" y="139" width="3" height="1" fill="#008000"/><rect x="732" y="139" width="3" height="1" fill="#008000"/><rect x="738" y="138" width="18" height="1" fill="#1e90ff"/><rect x="738" y="139" width="3" height="1" fill="#008000"/><rect x="744" y="139" width="3" height="1" fill="#008000"/><rect x="750" y="139" width="3" height="1" fill="#008000"/><rect x="756" y="139" width="3" height="1" fill="#008000"/><rect x="762" y="138" width="18" height="1" fill="#1e90ff"/><rect x="762" y="139" width="3" height="1" fill="#008000"/><rect x="768" y="139" width="3" height="1" fill="#008000"/><rect x="774" y="139" width="3" height="1" fill="#008000"/><rect x="780" y="139" width="3" height="1" fill="#008000"/><rect x="786" y="138" width="18" height="1" fill="#1e90ff"/><rect x="786" y="139" width="3" height="1" fill="#008000"/><rect x="792" y="139" width="3" height="1" fill="#008000"/><rect x="798" y="139" width="3" height="1" fill="#008000"/><rect x="804" y="139" width="3" height="1" fill="#008000"/><rect x="810" y="138" width="18" height="1" fill="#1e90ff"/><rect x="810" y="139" width="3" height="1" fill="#008000"/><rect x="816" y="139" width="3" height="1" fill="#008000"/><rect x="822" y="139" width="3" height="1" fill="#008000"/><rect x="828" y="139" width="3" height="1" fill="#008000"/><rect x="834" y="138" width="18" height="1" fill="#1e90ff"/><rect x="834" y="139" width="3" height="1" fill="#008000"/><rect x="840" y="139" width="3" height="1" fill="#008000"/><rect x="846" y="139" width="3" height="1" fill="#008000"/><rect x="852" y="139" width="3" height="1" fill="#008000"/><rect x="858" y="138" width="18" height="1" fill="#1e90ff"/><rect x="858" y="139" width="3" height="1" fill="#008000"/><rect x="864" y="139" width="3" height="1" fill="#008000"/><rect x="870" y="139" width="3" height="1" fill="#008000"/><rect x="876" y="139" width="3" height="1" fill="#008000"/><rect x="882" y="138" width="18" height="1" fill="#1e90ff"/><rect x="882" y="139" width="3" height="1" fill="#008000"/><rect x="888" y="139" width="3" height="1" fill="#008000"/><rect x="894" y="139" width="3" height="1" fill="#008000"/><rect x="900" y="139" width="3" height="1" fill="#008000"/><rect x="906" y="138" width="18" height="1" fill="#1e90ff"/><rect x="906" y="139" width="3" height="1" fill="#008000"/><rect x="912" y="139" width="3" height="1" fill="#008000"/><rect x="918" y="139" width="3" height="1" fill="#008000"/><rect x="924" y="139" width="3" height="1" fill="#008000"/><rect x="930" y="138" width="18" height="1" fill="#1e90ff"/><rect x="930" y="139" width="3" height="1" fill="#008000"/><rect x="936" y="139" width="3" height="1" fill="#008000"/><rect x="942" y="139" width="3" height="1" fill="#008000"/><rect x="948" y="139" width="3" height="1" fill="#008000"/><rect x="954" y="138" width="18" height="1" fill="#1e90ff"/><rect x="954" y="139" width="3" height="1" fill="#008000"/><rect x="960" y="139" width="3" height="1" fill="#008000"/><rect x="966" y="139" width="3" height="1" fill="#008000"/><rect x="972" y="139" width="3" height="1" fill="#008000"/>
<rect x="42" y="341" width="18" height="1" fill="#1e90ff"/><rect x="60" y="341" width="3" height="1" fill="#008000"/><rect x="66" y="341" width="18" height="1" fill="#1e90ff"/><rect x="84" y="341" width="3" height="1" fill="#008000"/><rect x="90" y="341" width="18" height="1" fill="#1e90ff"/><rect x="108" y="341" width="3" height="1" fill="#008000"/><rect x="114" y="341" width="18" height="1" fill="#1e90ff"/><rect x="132" y="341" width="3" height="1" fill="#008000"/><rect x="138" y="341" width="18" height="1" fill="#1e90ff"/><rect x="156" y="341" width="3" height="1" fill="#008000"/><rect x="162" y="341" width="18" height="1" fill="#1e90ff"/><rect x="180" y="341" width="3" height="1" fill="#008000"/><rect x="186" y="341" width="18" height="1" fill="#1e90ff"/><rect x="204" y="341" width="3" height="1" fill="#008000"/><rect x="210" y="341" width="18" height="1" fill="#1e90ff"/><rect x="228" y="341" width="3" height="1" fill="#008000"/><rect x="234" y="341" width="18" height="1" fill="#1e90ff"/><rect x="252" y="341" width="3" height="1" fill="#008000"/><rect x="258" y="341" width="18" height="1" fill="#1e90ff"/><rect x="276" y="341" width="3" height="1" fill="#008000"/><rect x="282" y="341" width="18" height="1" fill="#1e90ff"/><rect x="300" y="341" width="3" height="1" fill="#008000"/><rect x="306" y="341" width="18" height="1" fill="#1e90ff"/><rect x="324" y="341" width="3" height="1" fill="#008000"/><rect x="330" y="341" width="18" height="1" fill="#1e90ff"/><rect x="348" y="341" width="3" height="1" fill="#008000"/><rect x="354" y="341" width="18" height="1" fill="#1e90ff"/><rect x="372" y="341" width="3" height="1" fill="#008000"/><rect x="378" y="341" width="18" height="1" fill="#1e90ff"/><rect x="396" y="341" width="3" height="1" fill="#008000"/><rect x="402" y="341" width="18" height="1" fill="#1e90ff"/><rect x="420" y="341" width="3" height="1" fill="#008000"/><rect x="426" y="341" width="18" height="1" fill="#1e90ff"/><rect x="444" y="341" width="3" height="1" fill="#008000"/><rect x="450" y="341" width="18" height="1" fill="#1e90ff"/><rect x="468" y="341" width="3" height="1" fill="#008000"/><rect x="474" y="341" width="18" height="1" fill="#1e90ff"/><rect x="492" y="341" width="3" height="1" fill="#008000"/><rect x="498" y="341" width="18" height="1" fill="#1e90ff"/><rect x="516" y="341" width="3" height="1" fill="#008000"/><rect x="522" y="341" width="18" height="1" fill="#1e90ff"/><rect x="540" y="341" width="3" height="1" fill="#008000"/><rect x="546" y="341" width="18" height="1" fill="#1e90ff"/><rect x="564" y="341" width="3" height="1" fill="#008000"/><rect x="570" y="341" width="18" height="1" fill="#1e90ff"/><rect x="588" y="341" width="3" height="1" fill="#008000"/><rect x="594" y="341" width="18" height="1" fill="#1e90ff"/><rect x="612" y="341" width="3" height="1" fill="#008000"/><rect x="618" y="341" width="18" height="1" fill="#1e90ff"/><rect x="636" y="341" width="3" height="1" fill="#008000"/><rect x="642" y="341" width="18" height="1" fill="#1e90ff"/><rect x="660" y="341" width="3" height="1" fill="#008000"/><rect x="666" y="341" width="18" height="1" fill="#1e90ff"/><rect x="684" y="341" width="3" height="1" fill="#008000"/><rect x="690" y="341" width="18" height="1" fill="#1e90ff"/><rect x="708" y="341" width="3" height="1" fill="#008000"/><rect x="714" y="341" width="18" height="1" fill="#1e90ff"/><rect x="732" y="341" width="3" height="1" fill="#008000"/><rect x="738" y="341" width="18" height="1" fill="#1e90ff"/><rect x="756" y="341" width="3" height="1" fill="#008000"/><rect x="762" y="341" width="18" height="1" fill="#1e90ff"/><rect x="780" y="341" width="3" height="1" fill="#008000"/><rect x="786" y="341" width="18" height="1" fill="#1e90ff"/><rect x="804" y="341" width="3" height="1" fill="#008000"/><rect x="810" y="341" width="18" height="1" fill="#1e90ff"/><rect x="828" y="341" width="3" height="1" fill="#008000"/><rect x="834" y="341" width="18" height="1" fill="#1e90ff"/><rect x="852" y="341" width="3" height="1" fill="#008000"/><rect x="858" y="341" width="18" height="1" fill="#1e90ff"/><rect x="876" y="341" width="3" height="1" fill="#008000"/><rect x="882" y="341" width="18" height="1" fill="#1e90ff"/><rect x="900" y="341" width="3" height="1" fill="#008000"/><rect x="906" y="341" width="18" height="1" fill="#1e90ff"/><rect x="924" y="341" width="3" height="1" fill="#008000"/><rect x="930" y="341" width="18" height="1" fill="#1e90ff"/><rect x="948" y="341" width="3" height="1" fill="#008000"/><rect x="954" y="341" width="18" height="1" fill="#1e90ff"/><rect x="972" y="341" width="3" height="1" fill="#008000"/>
<rect x="43" y="303" width="934" height="2" fill="#ff0000"/><rect x="45" y="303" width="3" height="1" fill="#008000"/><rect x="51" y="303" width="3" height="1" fill="#008000"/><rect x="57" y="303" width="3" height="1" fill="#008000"/><rect x="63" y="303" width="3" height="1" fill="#008000"/><rect x="69" y="303" width="3" height="1" fill="#008000"/><rect x="75" y="303" width="3" height="1" fill="#008000"/><rect x="81" y="303" width="3" height="1" fill="#008000"/><rect x="87" y="303" width="3" height="1" fill="#008000"/><rect x="93" y="303" width="3" height="1" fill="#008000"/><rect x="99" y="303" width="3" height="1" fill="#008000"/><rect x="105" y="303" width="3" height="1" fill="#008000"/><rect x="111" y="303" width="3" height="1" fill="#008000"/><rect x="117" y="303" width="3" height="1" fill="#008000"/><rect x="123" y="303" width="3" height="1" fill="#008000"/><rect x="129" y="303" width="3" height="1" fill="#008000"/><rect x="135" y="303" width="3" height="1" fill="#008000"/><rect x="141" y="303" width="3" height="1" fill="#008000"/><rect x="147" y="303" width="3" height="1" fill="#008000"/><rect x="153" y="303" width="3" height="1" fill="#008000"/><rect x="159" y="303" width="3" height="1" fill="#008000"/><rect x="165" y="303" width="3" height="1" fill="#008000"/><rect x="171" y="303" width="3" height="1" fill="#008000"/><rect x="177" y="303" width="3" height="1" fill="#008000"/><rect x="183" y="303" width="3" height="1" fill="#008000"/><rect x="189" y="303" width="3" height="1" fill="#008000"/><rect x="195" y="303" width="3" height="1" fill="#008000"/><rect x="201" y="303" width="3" height="1" fill="#008000"/><rect x="207" y="303" width="3" height="1" fill="#008000"/><rect x="213" y="303" width="3" height="1" fill="#008000"/><rect x="219" y="303" width="3" height="1" fill="#008000"/><rect x="225" y="303" width="3" height="1" fill="#008000"/><rect x="231" y="303" width="3" height="1" fill="#008000"/><rect x="237" y="303" width="3" height="1" fill="#008000"/><rect x="243" y="303" width="3" height="1" fill="#008000"/><rect x="249" y="303" width="3" height="1" fill="#008000"/><rect x="255" y="303" width="3" height="1" fill="#008000"/><rect x="261" y="303" width="3" height="1" fill="#008000"/><rect x="267" y="303" width="3" height="1" fill="#008000"/><rect x="273" y="303" width="3" height="1" fill="#008000"/><rect x="279" y="303" width="3" height="1" fill="#008000"/><rect x="285" y="303" width="3" height="1" fill="#008000"/><rect x="291" y="303" width="3" height="1" fill="#008000"/><rect x="297" y="303" width="3" height="1" fill="#008000"/><rect x="303" y="303" width="3" height="1" fill="#008000"/><rect x="309" y="303" width="3" height="1" fill="#008000"/><rect x="315" y="303" width="3" height="1" fill="#008000"/><rect x="321" y="303" width="3" height="1" fill="#008000"/><rect x="327" y="303" width="3" height="1" fill="#008000"/><rect x="333" y="303" width="3" height="1" fill="#008000"/><rect x="339" y="303" width="3" height="1" fill="#008000"/><rect x="345" y="303" width="3" height="1" fill="#008000"/><rect x="351" y="303" width="3" height="1" fill="#008000"/><rect x="357" y="303" width="3" height="1" fill="#008000"/><rect x="363" y="303" width="3" height="1" fill="#008000"/><rect x="369" y="303" width="3" height="1" fill="#008000"/><rect x="375" y="303" width="3" height="1" fill="#008000"/><rect x="381" y="303" width="3" height="1" fill="#008000"/><rect x="387" y="303" width="3" height="1" fill="#008000"/><rect x="393" y="303" width="3" height="1" fill="#008000"/><rect x="399" y="303" width="3" height="1" fill="#008000"/><rect x="405" y="303" width="3" height="1" fill="#008000"/><rect x="411" y="303" width="3" height="1" fill="#008000"/><rect x="417" y="303" width="3" height="1" fill="#008000"/><rect x="423" y="303" width="3" height="1" fill="#008000"/><rect x="429" y="303" width="3" height="1" fill="#008000"/><rect x="435" y="303" width="3" height="1" fill="#008000"/><rect x="441" y="303" width="3" height="1" fill="#008000"/><rect x="447" y="303" width="3" height="1" fill="#008000"/><rect x="453" y="303" width="3" height="1" fill="#008000"/><rect x="459" y="303" width="3" height="1" fill="#008000"/><rect x="465" y="303" width="3" height="1" fill="#008000"/><rect x="471" y="303" width="3" height="1" fill="#008000"/><rect x="477" y="303" width="3" height="1" fill="#008000"/><rect x="483" y="303" width="3" height="1" fill="#008000"/><rect x="489" y="303" width="3" height="1" fill="#008000"/><rect x="495" y="303" width="3" height="1" fill="#008000"/><rect x="501" y="303" width="3" height="1" fill="#008000"/><rect x="507" y="303" width="3" height="1" fill="#008000"/><rect x="513" y="303" width="3" height="1" fill="#008000"/><rect x="519" y="303" width="3" height="1" fill="#008000"/><rect x="525" y="303" width="3" height="1" fill="#008000"/><rect x="531" y="303" width="3" height="1" fill="#008000"/><rect x="537" y="303" width="3" height="1" fill="#008000"/><rect x="543" y="303" width="3" height="1" fill="#008000"/><rect x="549" y="303" width="3" height="1" fill="#008000"/><rect x="555" y="303" width="3" height="1" fill="#008000"/><rect x="561" y="303" width="3" height="1" fill="#008000"/><rect x="567" y="303" width="3" height="1" fill="#008000"/><rect x="573" y="303" width="3" height="1" fill="#008000"/><rect x="579" y="303" width="3" height="1" fill="#008000"/><rect x="585" y="303" width="3" height="1" fill="#008000"/><rect x="591" y="303" width="3" height="1" fill="#008000"/><rect x="597" y="303" width="3" height="1" fill="#008000"/><rect x="603" y="303" width="3" height="1" fill="#008000"/><rect x="609" y="303" width="3" height="1" fill="#008000"/><rect x="615" y="303" width="3" height="1" fill="#008000"/><rect x="621" y="303" width="3" height="1" fill="#008000"/><rect x="627" y="303" width="3" height="1" fill="#008000"/><rect x="633" y="303" width="3" height="1" fill="#008000"/><rect x="639" y="303" width="3" height="1" fill="#008000"/><rect x="645" y="303" width="3" height="1" fill="#008000"/><rect x="651" y="303" width="3" height="1" fill="#008000"/><rect x="657" y="303" width="3" height="1" fill="#008000"/><rect x="663" y="303" width="3" height="1" fill="#008000"/><rect x="669" y="303" width="3" height="1" fill="#008000"/><rect x="675" y="303" width="3" height="1" fill="#008000"/><rect x="681" y="303" width="3" height="1" fill="#008000"/><rect x="687" y="303" width="3" height="1" fill="#008000"/><rect x="693" y="303" width="3" height="1" fill="#008000"/><rect x="699" y="303" width="3" height="1" fill="#008000"/><rect x="705" y="303" width="3" height="1" fill="#008000"/><rect x="711" y="303" width="3" height="1" fill="#008000"/><rect x="717" y="303" width="3" height="1" fill="#008000"/><rect x="723" y="303" width="3" height="1" fill="#008000"/><rect x="729" y="303" width="3" height="1" fill="#008000"/><rect x="735" y="303" width="3" height="1" fill="#008000"/><rect x="741" y="303" width="3" height="1" fill="#008000"/><rect x="747" y="303" width="3" height="1" fill="#008000"/><rect x="753" y="303" width="3" height="1" fill="#008000"/><rect x="759" y="303" width="3" height="1" fill="#008000"/><rect x="765" y="303" width="3" height="1" fill="#008000"/><rect x="771" y="303" width="3" height="1" fill="#008000"/><rect x="777" y="303" width="3" height="1" fill="#008000"/><rect x="783" y="303" width="3" height="1" fill="#008000"/><rect x="789" y="303" width="3" height="1" fill="#008000"/><rect x="795" y="303" width="3" height="1" fill="#008000"/><rect x="801" y="303" width="3" height="1" fill="#008000"/><rect x="807" y="303" width="3" height="1" fill="#008000"/><rect x="813" y="303" width="3" height="1" fill="#008000"/><rect x="819" y="303" width="3" height="1" fill="#008000"/><rect x="825" y="303" width="3" height="1" fill="#008000"/><rect x="831" y="303" width="3" height="1" fill="#008000"/><rect x="837" y="303" width="3" height="1" fill="#008000"/><rect x="843" y="303" width="3" height="1" fill="#008000"/><rect x="849" y="303" width="3" height="1" fill="#008000"/><rect x="855" y="303" width="3" height="1" fill="#008000"/><rect x="861" y="303" width="3" height="1" fill="#008000"/><rect x="867" y="303" width="3" height="1" fill="#008000"/><rect x="873" y="303" width="3" height="1" fill="#008000"/><rect x="879" y="303" width="3" height="1" fill="#008000"/><rect x="885" y="303" width="3" height="1" fill="#008000"/><rect x="891" y="303" width="3" height="1" fill="#008000"/><rect x="897" y="303" width="3" height="1" fill="#008000"/><rect x="903" y="303" width="3" height="1" fill="#008000"/><rect x="909" y="303" width="3" height="1" fill="#008000"/><rect x="915" y="303" width="3" height="1" fill="#008000"/><rect x="921" y="303" width="3" height="1" fill="#008000"/><rect x="927" y="303" width="3" height="1" fill="#008000"/><rect x="933" y="303" width="3" height="1" fill="#008000"/><rect x="939" y="303" width="3" height="1" fill="#008000"/><rect x="945" y="303" width="3" height="1" fill="#008000"/><rect x="951" y="303" width="3" height="1" fill="#008000"/><rect x="957" y="303" width="3" height="1" fill="#008000"/><rect x="963" y="303" width="3" height="1" fill="#008000"/><rect x="969" y="303" width="3" height="1" fill="#008000"/><rect x="975" y="303" width="3" height="1" fill="#008000"/>
<rect x="48" y="124" width="1" height="11" fill="#000"/><rect x="44" y="129" width="8" height="6" fill="#000"/><rect x="45" y="130" width="6" height="4" fill="#008000"/><rect x="59" y="123" width="1" height="14" fill="#000"/><rect x="55" y="124" width="8" height="6" fill="#000"/><rect x="56" y="125" width="6" height="4" fill="#008000"/><rect x="70" y="122" width="1" height="7" fill="#000"/><rect x="66" y="122" width="8" height="3" fill="#000"/><rect x="67" y="123" width="6" height="1" fill="#008000"/><rect x="81" y="122" width="1" height="25" fill="#000"/><rect x="77" y="122" width="8" height="25" fill="#000"/><rect x="78" y="123" width="6" height="23" fill="#ff0000"/><rect x="92" y="139" width="1" height="27" fill="#000"/><rect x="88" y="140" width="8" height="17" fill="#000"/><rect x="89" y="141" width="6" height="15" fill="#ff0000"/><rect x="103" y="145" width="1" height="35" fill="#000"/><rect x="99" y="150" width="8" height="29" fill="#000"/><rect x="100" y="151" width="6" height="27" fill="#ff0000"/><rect x="114" y="158" width="1" height="31" fill="#000"/><rect x="110" y="158" width="8" height="21" fill="#000"/><rect x="111" y="159" width="6" height="19" fill="#008000"/><rect x="125" y="139" width="1" height="27" fill="#000"/><rect x="121" y="141" width="8" height="18" fill="#000"/><rect x="122" y="142" width="6" height="16" fill="#008000"/><rect x="136" y="140" width="1" height="19" fill="#000"/><rect x="132" y="141" width="8" height="15" fill="#000"/><rect x="133" y="142" width="6" height="13" fill="#ff0000"/><rect x="147" y="152" width="1" height="18" fill="#000"/><rect x="143" y="155" width="8" height="9" fill="#000"/><rect x="144" y="156" width="6" height="7" fill="#ff0000"/><rect x="158" y="158" width="1" height="14" fill="#000"/><rect x="154" y="163" width="8" height="9" fill="#000"/><rect x="155" y="164" width="6" height="7" fill="#ff0000"/><rect x="169" y="156" width="1" height="16" fill="#000"/><rect x="165" y="164" width="8" height="8" fill="#000"/><rect x="166" y="165" width="6" height="6" fill="#008000"/><rect x="180" y="164" width="1" height="16" fill="#000"/><rect x="176" y="164" width="8" height="11" fill="#000"/><rect x="177" y="165" width="6" height="9" fill="#ff0000"/><rect x="191" y="174" width="1" height="66" fill="#000"/><rect x="187" y="174" width="8" height="63" fill="#000"/><rect x="188" y="175" width="6" height="61" fill="#ff0000"/><rect x="202" y="196" width="1" height="41" fill="#000"/><rect x="198" y="199" width="8" height="38" fill="#000"/><rect x="199" y="200" width="6" height="36" fill="#008000"/><rect x="213" y="190" width="1" height="16" fill="#000"/><rect x="209" y="192" width="8" height="8" fill="#000"/><rect x="210" y="193" width="6" height="6" fill="#008000"/><rect x="224" y="190" width="1" height="19" fill="#000"/><rect x="220" y="192" width="8" height="12" fill="#000"/><rect x="221" y="193" width="6" height="10" fill="#ff0000"/><rect x="235" y="183" width="1" height="23" fill="#000"/><rect x="231" y="203" width="8" height="3" fill="#000"/><rect x="232" y="204" width="6" height="1" fill="#ff0000"/><rect x="246" y="194" width="1" height="53" fill="#000"/><rect x="242" y="205" width="8" height="31" fill="#000"/><rect x="243" y="206" width="6" height="29" fill="#ff0000"/><rect x="257" y="224" width="1" height="32" fill="#000"/><rect x="253" y="235" width="8" height="21" fill="#000"/><rect x="254" y="236" width="6" height="19" fill="#ff0000"/><rect x="268" y="237" width="1" height="35" fill="#000"/><rect x="264" y="255" width="8" height="14" fill="#000"/><rect x="265" y="256" width="6" height="12" fill="#ff0000"/><rect x="279" y="252" width="1" height="45" fill="#000"/><rect x="275" y="268" width="8" height="25" fill="#000"/><rect x="276" y="269" width="6" height="23" fill="#ff0000"/><rect x="290" y="280" width="1" height="30" fill="#000"/><rect x="286" y="292" width="8" height="15" fill="#000"/><rect x="287" y="293" width="6" height="13" fill="#ff0000"/><rect x="301" y="238" width="1" height="82" fill="#000"/><rect x="297" y="238" width="8" height="69" fill="#000"/><rect x="298" y="239" width="6" height="67" fill="#008000"/><rect x="312" y="235" width="1" height="38" fill="#000"/><rect x="308" y="238" width="8" height="33" fill="#000"/><rect x="309" y="239" width="6" height="31" fill="#ff0000"/><rect x="323" y="259" width="1" height="56" fill="#000"/><rect x="319" y="270" width="8" height="42" fill="#000"/><rect x="320" y="271" width="6" height="40" fill="#ff0000"/><rect x="334" y="282" width="1" height="34" fill="#000"/><rect x="330" y="283" width="8" height="29" fill="#000"/><rect x="331" y="284" width="6" height="27" fill="#008000"/><rect x="345" y="281" width="1" height="28" fill="#000"/><rect x="341" y="283" width="8" height="19" fill="#000"/><rect x="342" y="284" width="6" height="17" fill="#ff0000"/><rect x="356" y="266" width="1" height="37" fill="#000"/><rect x="352" y="267" width="8" height="35" fill="#000"/><rect x="353" y="268" width="6" height="33" fill="#008000"/><rect x="367" y="266" width="1" height="20" fill="#000"/><rect x="363" y="267" width="8" height="14" fill="#000"/><rect x="364" y="268" width="6" height="12" fill="#ff0000"/><rect x="378" y="280" width="1" height="26" fill="#000"/><rect x="374" y="280" width="8" height="18" fill="#000"/><rect x="375" y="281" width="6" height="16" fill="#ff0000"/><rect x="389" y="288" width="1" height="18" fill="#000"/><rect x="385" y="293" width="8" height="5" fill="#000"/><rect x="386" y="294" width="6" height="3" fill="#008000"/><rect x="400" y="292" width="1" height="29" fill="#000"/><rect x="396" y="293" width="8" height="15" fill="#000"/><rect x="397" y="294" width="6" height="13" fill="#ff0000"/><rect x="411" y="301" width="1" height="25" fill="#000"/><rect x="407" y="307" width="8" height="14" fill="#000"/><rect x="408" y="308" width="6" height="12" fill="#ff0000"/><rect x="422" y="295" width="1" height="27" fill="#000"/><rect x="418" y="300" width="8" height="21" fill="#000"/><rect x="419" y="301" width="6" height="19" fill="#008000"/><rect x="433" y="279" width="1" height="26" fill="#000"/><rect x="429" y="288" width="8" height="13" fill="#000"/><rect x="430" y="289" width="6" height="11" fill="#008000"/><rect x="444" y="275" width="1" height="21" fill="#000"/><rect x="440" y="288" width="8" height="5" fill="#000"/><rect x="441" y="289" width="6" height="3" fill="#ff0000"/><rect x="455" y="277" width="1" height="19" fill="#000"/><rect x="451" y="279" width="8" height="14" fill="#000"/><rect x="452" y="280" width="6" height="12" fill="#008000"/><rect x="466" y="269" width="1" height="11" fill="#000"/><rect x="462" y="270" width="8" height="10" fill="#000"/><rect x="463" y="271" width="6" height="8" fill="#008000"/><rect x="477" y="248" width="1" height="26" fill="#000"/><rect x="473" y="248" width="8" height="23" fill="#000"/><rect x="474" y="249" width="6" height="21" fill="#008000"/><rect x="488" y="246" width="1" height="30" fill="#000"/><rect x="484" y="249" width="8" height="27" fill="#000"/><rect x="485" y="250" width="6" height="25" fill="#ff0000"/><rect x="499" y="270" width="1" height="25" fill="#000"/><rect x="495" y="275" width="8" height="20" fill="#000"/><rect x="496" y="276" width="6" height="18" fill="#ff0000"/><rect x="510" y="275" width="1" height="20" fill="#000"/><rect x="506" y="275" width="8" height="20" fill="#000"/><rect x="507" y="276" width="6" height="18" fill="#008000"/><rect x="521" y="266" width="1" height="23" fill="#000"/><rect x="517" y="275" width="8" height="11" fill="#000"/><rect x="518" y="276" width="6" height="9" fill="#ff0000"/><rect x="532" y="282" width="1" height="11" fill="#000"/><rect x="528" y="285" width="8" height="4" fill="#000"/><rect x="529" y="286" width="6" height="2" fill="#ff0000"/><rect x="543" y="284" width="1" height="23" fill="#000"/><rect x="539" y="288" width="8" height="18" fill="#000"/><rect x="540" y="289" width="6" height="16" fill="#ff0000"/><rect x="554" y="284" width="1" height="27" fill="#000"/><rect x="550" y="286" width="8" height="20" fill="#000"/><rect x="551" y="287" width="6" height="18" fill="#008000"/><rect x="565" y="286" width="1" height="16" fill="#000"/><rect x="561" y="286" width="8" height="16" fill="#000"/><rect x="562" y="287" width="6" height="14" fill="#ff0000"/><rect x="576" y="295" width="1" height="10" fill="#000"/><rect x="572" y="301" width="8" height="3" fill="#000"/><rect x="573" y="302" width="6" height="1" fill="#ff0000"/><rect x="587" y="294" width="1" height="19" fill="#000"/><rect x="583" y="298" width="8" height="6" fill="#000"/><rect x="584" y="299" width="6" height="4" fill="#008000"/><rect x="598" y="298" width="1" height="22" fill="#000"/><rect x="594" y="298" width="8" height="21" fill="#000"/><rect x="595" y="299" width="6" height="19" fill="#ff0000"/><rect x="609" y="317" width="1" height="23" fill="#000"/><rect x="605" y="318" width="8" height="17" fill="#000"/><rect x="606" y="319" width="6" height="15" fill="#ff0000"/><rect x="620" y="319" width="1" height="17" fill="#000"/><rect x="616" y="325" width="8" height="10" fill="#000"/><rect x="617" y="326" width="6" height="8" fill="#008000"/><rect x="631" y="302" width="1" height="26" fill="#000"/><rect x="627" y="305" width="8" height="17" fill="#000"/><rect x="628" y="306" width="6" height="15" fill="#008000"/><rect x="642" y="298" width="1" height="14" fill="#000"/><rect x="638" y="304" width="8" height="5" fill="#000"/><rect x="639" y="305" width="6" height="3" fill="#ff0000"/><rect x="653" y="299" width="1" height="16" fill="#000"/><rect x="649" y="302" width="8" height="6" fill="#000"/><rect x="650" y="303" width="6" height="4" fill="#008000"/><rect x="664" y="295" width="1" height="8" fill="#000"/><rect x="660" y="297" width="8" height="6" fill="#000"/><rect x="661" y="298" width="6" height="4" fill="#008000"/><rect x="675" y="294" width="1" height="9" fill="#000"/><rect x="671" y="297" width="8" height="1" fill="#000"/><rect x="686" y="296" width="1" height="27" fill="#000"/><rect x="682" y="296" width="8" height="27" fill="#000"/><rect x="683" y="297" width="6" height="25" fill="#ff0000"/><rect x="697" y="308" width="1" height="17" fill="#000"/><rect x="693" y="310" width="8" height="13" fill="#000"/><rect x="694" y="311" width="6" height="11" fill="#008000"/><rect x="708" y="305" width="1" height="14" fill="#000"/><rect x="704" y="308" width="8" height="3" fill="#000"/><rect x="705" y="309" width="6" height="1" fill="#008000"/><rect x="719" y="301" width="1" height="19" fill="#000"/><rect x="715" y="308" width="8" height="8" fill="#000"/><rect x="716" y="309" width="6" height="6" fill="#ff0000"/><rect x="730" y="312" width="1" height="14" fill="#000"/><rect x="726" y="315" width="8" height="1" fill="#000"/><rect x="741" y="299" width="1" height="17" fill="#000"/><rect x="737" y="303" width="8" height="13" fill="#000"/><rect x="738" y="304" width="6" height="11" fill="#008000"/><rect x="752" y="292" width="1" height="15" fill="#000"/><rect x="748" y="299" width="8" height="5" fill="#000"/><rect x="749" y="300" width="6" height="3" fill="#008000"/><rect x="763" y="289" width="1" height="11" fill="#000"/><rect x="759" y="292" width="8" height="8" fill="#000"/><rect x="760" y="293" width="6" height="6" fill="#008000"/><rect x="774" y="290" width="1" height="14" fill="#000"/><rect x="770" y="292" width="8" height="12" fill="#000"/><rect x="771" y="293" width="6" height="10" fill="#ff0000"/><rect x="785" y="296" width="1" height="15" fill="#000"/><rect x="781" y="298" width="8" height="6" fill="#000"/><rect x="782" y="299" width="6" height="4" fill="#008000"/><rect x="796" y="295" width="1" height="11" fill="#000"/><rect x="792" y="298" width="8" height="6" fill="#000"/><rect x="793" y="299" width="6" height="4" fill="#ff0000"/><rect x="807" y="300" width="1" height="7" fill="#000"/><rect x="803" y="302" width="8" height="3" fill="#000"/><rect x="804" y="303" width="6" height="1" fill="#ff0000"/>
<rect x="42" y="348" width="766" height="5" fill="#fff"/><rect x="42" y="349" width="6" height="1" fill="#000"/><rect x="42" y="352" width="6" height="1" fill="#000"/><rect x="60" y="349" width="10" height="1" fill="#000"/><rect x="60" y="352" width="10" height="1" fill="#000"/><rect x="82" y="349" width="10" height="1" fill="#000"/><rect x="82" y="352" width="10" height="1" fill="#000"/><rect x="104" y="349" width="10" height="1" fill="#000"/><rect x="104" y="352" width="10" height="1" fill="#000"/><rect x="126" y="349" width="10" height="1" fill="#000"/><rect x="126" y="352" width="10" height="1" fill="#000"/><rect x="148" y="349" width="10" height="1" fill="#000"/><rect x="148" y="352" width="10" height="1" fill="#000"/><rect x="170" y="349" width="10" height="1" fill="#000"/><rect x="170" y="352" width="10" height="1" fill="#000"/><rect x="192" y="349" width="10" height="1" fill="#000"/><rect x="192" y="352" width="10" height="1" fill="#000"/><rect x="214" y="349" width="10" height="1" fill="#000"/><rect x="214" y="352" width="10" height="1" fill="#000"/><rect x="236" y="349" width="10" height="1" fill="#000"/><rect x="236" y="352" width="10" height="1" fill="#000"/><rect x="258" y="349" width="10" height="1" fill="#000"/><rect x="258" y="352" width="10" height="1" fill="#000"/><rect x="280" y="349" width="10" height="1" fill="#000"/><rect x="280" y="352" width="10" height="1" fill="#000"/><rect x="302" y="349" width="10" height="1" fill="#000"/><rect x="302" y="352" width="10" height="1" fill="#000"/><rect x="324" y="349" width="10" height="1" fill="#000"/><rect x="324" y="352" width="10" height="1" fill="#000"/><rect x="346" y="349" width="10" height="1" fill="#000"/><rect x="346" y="352" width="10" height="1" fill="#000"/><rect x="368" y="349" width="10" height="1" fill="#000"/><rect x="368" y="352" width="10" height="1" fill="#000"/><rect x="390" y="349" width="10" height="1" fill="#000"/><rect x="390" y="352" width="10" height="1" fill="#000"/><rect x="412" y="349" width="10" height="1" fill="#000"/><rect x="412" y="352" width="10" height="1" fill="#000"/><rect x="434" y="349" width="10" height="1" fill="#000"/><rect x="434" y="352" width="10" height="1" fill="#000"/><rect x="456" y="349" width="10" height="1" fill="#000"/><rect x="456" y="352" width="10" height="1" fill="#000"/><rect x="478" y="349" width="10" height="1" fill="#000"/><rect x="478" y="352" width="10" height="1" fill="#000"/><rect x="500" y="349" width="10" height="1" fill="#000"/><rect x="500" y="352" width="10" height="1" fill="#000"/><rect x="522" y="349" width="10" height="1" fill="#000"/><rect x="522" y="352" width="10" height="1" fill="#000"/><rect x="544" y="349" width="10" height="1" fill="#000"/><rect x="544" y="352" width="10" height="1" fill="#000"/><rect x="566" y="349" width="10" height="1" fill="#000"/><rect x="566" y="352" width="10" height="1" fill="#000"/><rect x="588" y="349" width="10" height="1" fill="#000"/><rect x="588" y="352" width="10" height="1" fill="#000"/><rect x="610" y="349" width="10" height="1" fill="#000"/><rect x="610" y="352" width="10" height="1" fill="#000"/><rect x="632" y="349" width="10" height="1" fill="#000"/><rect x="632" y="352" width="10" height="1" fill="#000"/><rect x="654" y="349" width="10" height="1" fill="#000"/><rect x="654" y="352" width="10" height="1" fill="#000"/><rect x="676" y="349" width="10" height="1" fill="#000"/><rect x="676" y="352" width="10" height="1" fill="#000"/><rect x="698" y="349" width="10" height="1" fill="#000"/><rect x="698" y="352" width="10" height="1" fill="#000"/><rect x="720" y="349" width="10" height="1" fill="#000"/><rect x="720" y="352" width="10" height="1" fill="#000"/><rect x="742" y="349" width="10" height="1" fill="#000"/><rect x="742" y="352" width="10" height="1" fill="#000"/><rect x="764" y="349" width="10" height="1" fill="#000"/><rect x="764" y="352" width="10" height="1" fill="#000"/><rect x="786" y="349" width="10" height="1" fill="#000"/><rect x="786" y="352" width="10" height="1" fill="#000"/><rect x="808" y="349" width="168" height="1" fill="#000"/><rect x="808" y="352" width="168" height="1" fill="#000"/>
<rect x="42" y="618" width="766" height="5" fill="#fff"/><rect x="42" y="619" width="6" height="1" fill="#000"/><rect x="42" y="622" width="6" height="1" fill="#000"/><rect x="60" y="619" width="10" height="1" fill="#000"/><rect x="60" y="622" width="10" height="1" fill="#000"/><rect x="82" y="619" width="10" height="1" fill="#000"/><rect x="82" y="622" width="10" height="1" fill="#000"/><rect x="104" y="619" width="10" height="1" fill="#000"/><rect x="104" y="622" width="10" height="1" fill="#000"/><rect x="126" y="619" width="10" height="1" fill="#000"/><rect x="126" y="622" width="10" height="1" fill="#000"/><rect x="148" y="619" width="10" height="1" fill="#000"/><rect x="148" y="622" width="10" height="1" fill="#000"/><rect x="170" y="619" width="10" height="1" fill="#000"/><rect x="170" y="622" width="10" height="1" fill="#000"/><rect x="192" y="619" width="10" height="1" fill="#000"/><rect x="192" y="622" width="10" height="1" fill="#000"/><rect x="214" y="619" width="10" height="1" fill="#000"/><rect x="214" y="622" width="10" height="1" fill="#000"/><rect x="236" y="619" width="10" height="1" fill="#000"/><rect x="236" y="622" width="10" height="1" fill="#000"/><rect x="258" y="619" width="10" height="1" fill="#000"/><rect x="258" y="622" width="10" height="1" fill="#000"/><rect x="280" y="619" width="10" height="1" fill="#000"/><rect x="280" y="622" width="10" height="1" fill="#000"/><rect x="302" y="619" width="10" height="1" fill="#000"/><rect x="302" y="622" width="10" height="1" fill="#000"/><rect x="324" y="619" width="10" height="1" fill="#000"/><rect x="324" y="622" width="10" height="1" fill="#000"/><rect x="346" y="619" width="10" height="1" fill="#000"/><rect x="346" y="622" width="10" height="1" fill="#000"/><rect x="368" y="619" width="10" height="1" fill="#000"/><rect x="368" y="622" width="10" height="1" fill="#000"/><rect x="390" y="619" width="10" height="1" fill="#000"/><rect x="390" y="622" width="10" height="1" fill="#000"/><rect x="412" y="619" width="10" height="1" fill="#000"/><rect x="412" y="622" width="10" height="1" fill="#000"/><rect x="434" y="619" width="10" height="1" fill="#000"/><rect x="434" y="622" width="10" height="1" fill="#000"/><rect x="456" y="619" width="10" height="1" fill="#000"/><rect x="456" y="622" width="10" height="1" fill="#000"/><rect x="478" y="619" width="10" height="1" fill="#000"/><rect x="478" y="622" width="10" height="1" fill="#000"/><rect x="500" y="619" width="10" height="1" fill="#000"/><rect x="500" y="622" width="10" height="1" fill="#000"/><rect x="522" y="619" width="10" height="1" fill="#000"/><rect x="522" y="622" width="10" height="1" fill="#000"/><rect x="544" y="619" width="10" height="1" fill="#000"/><rect x="544" y="622" width="10" height="1" fill="#000"/><rect x="566" y="619" width="10" height="1" fill="#000"/><rect x="566" y="622" width="10" height="1" fill="#000"/><rect x="588" y="619" width="10" height="1" fill="#000"/><rect x="588" y="622" width="10" height="1" fill="#000"/><rect x="610" y="619" width="10" height="1" fill="#000"/><rect x="610" y="622" width="10" height="1" fill="#000"/><rect x="632" y="619" width="10" height="1" fill="#000"/><rect x="632" y="622" width="10" height="1" fill="#000"/><rect x="654" y="619" width="10" height="1" fill="#000"/><rect x="654" y="622" width="10" height="1" fill="#000"/><rect x="676" y="619" width="10" height="1" fill="#000"/><rect x="676" y="622" width="10" height="1" fill="#000"/><rect x="698" y="619" width="10" height="1" fill="#000"/><rect x="698" y="622" width="10" height="1" fill="#000"/><rect x="720" y="619" width="10" height="1" fill="#000"/><rect x="720" y="622" width="10" height="1" fill="#000"/><rect x="742" y="619" width="10" height="1" fill="#000"/><rect x="742" y="622" width="10" height="1" fill="#000"/><rect x="764" y="619" width="10" height="1" fill="#000"/><rect x="764" y="622" width="10" height="1" fill="#000"/><rect x="786" y="619" width="10" height="1" fill="#000"/><rect x="786" y="622" width="10" height="1" fill="#000"/><rect x="808" y="619" width="168" height="1" fill="#000"/><rect x="808" y="622" width="168" height="1" fill="#000"/>
<rect x="42" y="369" width="924" height="1" fill="#808080"/><rect x="42" y="369" width="1" height="245" fill="#808080"/><rect x="965" y="369" width="1" height="245" fill="#808080"/><rect x="42" y="613" width="924" height="1" fill="#808080"/>
</svg>
<svg class="a" style="left:0;top:0" width="1024" height="734" shape-rendering="crispEdges"><polyline points="43.0,605.0 48.5,605.0 59.5,605.0 70.5,395.2 81.5,605.0 92.5,605.0 103.5,605.0 114.5,413.2 125.5,605.0 136.5,402.5 147.5,605.0 158.5,605.0 169.5,605.0 180.5,605.0 191.5,421.0 202.5,605.0 213.5,605.0 224.5,605.0 235.5,421.4 246.5,605.0 257.5,605.0 268.5,605.0 279.5,605.0 290.5,605.0 301.5,449.3 312.5,444.5 323.5,605.0 334.5,468.9 345.5,605.0 356.5,457.0 367.5,605.0 378.5,605.0 389.5,605.0 400.5,605.0 411.5,477.7 422.5,605.0 433.5,605.0 444.5,605.0 455.5,605.0 466.5,605.0 477.5,605.0 488.5,448.3 499.5,464.0 510.5,605.0 521.5,457.1 532.5,605.0 543.5,605.0 554.5,471.2 565.5,605.0 576.5,605.0 587.5,605.0 598.5,605.0 609.5,485.0 620.5,605.0 631.5,605.0 642.5,605.0 653.5,605.0 664.5,605.0 675.5,469.3 686.5,605.0 697.5,481.0 708.5,605.0 719.5,605.0 730.5,483.0 741.5,605.0 752.5,605.0 763.5,467.3 774.5,605.0 785.5,477.0" fill="none" stroke="#7070a0" stroke-width="1"/><polyline points="43.0,388.2 48.5,388.2 59.5,396.2 70.5,396.2 81.5,396.2 92.5,396.2 103.5,396.2 114.5,396.2 125.5,404.4 136.5,404.4 147.5,404.4 158.5,404.4 169.5,404.4 180.5,404.4 191.5,404.4 202.5,404.4 213.5,404.4 224.5,423.4 235.5,423.4 246.5,423.4 257.5,423.4 268.5,423.4 279.5,423.4 290.5,423.4 301.5,446.4 312.5,446.4 323.5,446.4 334.5,446.4 345.5,460.2 356.5,460.2 367.5,460.2 378.5,460.2 389.5,460.2 400.5,460.2 411.5,460.2 422.5,460.2 433.5,460.2 444.5,460.2 455.5,460.2 466.5,460.2 477.5,451.2 488.5,451.2 499.5,451.2 510.5,460.3 521.5,460.3 532.5,460.3 543.5,460.3 554.5,460.3 565.5,460.3 576.5,460.3 587.5,460.3 598.5,460.3 609.5,460.3 620.5,460.3 631.5,460.3 642.5,460.3 653.5,460.3 664.5,472.2 675.5,472.2 686.5,472.2 697.5,472.2 708.5,472.2 719.5,472.2 730.5,472.2 741.5,472.2 752.5,470.3 763.5,470.3 774.5,470.3" fill="none" stroke="#800080" stroke-width="1"/><polyline points="43.0,403.4 48.5,403.4 59.5,403.4 70.5,403.4 81.5,403.4 92.5,403.4 103.5,426.3 114.5,426.3 125.5,426.3 136.5,426.3 147.5,426.3 158.5,426.3 169.5,426.3 180.5,449.2 191.5,449.2 202.5,449.2 213.5,449.2 224.5,449.2 235.5,449.2 246.5,449.2 257.5,449.2 268.5,449.2 279.5,449.2 290.5,484.1 301.5,484.1 312.5,484.1 323.5,482.1 334.5,482.1 345.5,482.1 356.5,482.1 367.5,482.1 378.5,482.1 389.5,482.1 400.5,486.4 411.5,486.4 422.5,486.4 433.5,486.4 444.5,486.4 455.5,486.4 466.5,486.4 477.5,486.4 488.5,473.3 499.5,473.3 510.5,473.3 521.5,473.3 532.5,473.3 543.5,480.2 554.5,480.2 565.5,480.2 576.5,480.2 587.5,480.2 598.5,493.2 609.5,493.2 620.5,493.2 631.5,493.2 642.5,493.2 653.5,493.2 664.5,493.2 675.5,493.2 686.5,486.3 697.5,486.3 708.5,486.3 719.5,487.3 730.5,487.3 741.5,487.3 752.5,487.3 763.5,487.3 774.5,481.0" fill="none" stroke="#0000ff" stroke-width="1"/></svg>
<!-- overlays on chart -->
<div class="a" style="left:57px;top:143px;width:62px;height:14px;background:#a8a8a8"></div>
<div class="a" style="left:51px;top:138px;width:63px;height:14px;background:#fff"></div>
<div class="t11" style="left:52px;top:138px;color:#101028;letter-spacing:-0.15px">386,6,B,1,00</div>
<div class="t11" style="left:46px;top:287.5px;color:#ff0000;font-size:12.6px;letter-spacing:0.1px">246,5</div>
<div class="t11" style="left:46px;top:286.5px;color:#008000;font-size:12.6px;letter-spacing:0.1px">246,7</div>
<div class="a" style="left:57px;top:308px;width:90px;height:14px;background:#a8a8a8"></div>
<div class="a" style="left:51px;top:303px;width:91px;height:14px;background:#800000"></div>
<div class="t11" style="left:52px;top:303px;color:#fff;letter-spacing:-0.15px">246,6,P/L:-2,40,24</div>
<div class="t11" style="left:46px;top:325px;color:#309830;font-size:12.6px;letter-spacing:0.1px">214,6</div>
<div class="a" style="left:51px;top:341px;width:63px;height:6px;background:#fff;overflow:hidden"><div class="t11" style="left:1px;top:0;color:#101028">214,6,S,1,00</div></div>
<div class="a" style="left:114px;top:345px;width:5px;height:2px;background:#a8a8a8"></div>
<div class="a" style="left:984px;top:101px;width:34px;height:246px;overflow:hidden"><div class="pl" style="left:1px;top:2.7px">410,0</div><div class="pl" style="left:1px;top:13.4px">400,0</div><div class="pl" style="left:1px;top:25.3px">390,0</div><div class="pl" style="left:1px;top:37.1px">380,0</div><div class="pl" style="left:1px;top:48.9px">370,0</div><div class="pl" style="left:1px;top:60.8px">360,0</div><div class="pl" style="left:1px;top:72.6px">350,0</div><div class="pl" style="left:1px;top:84.5px">340,0</div><div class="pl" style="left:1px;top:96.3px">330,0</div><div class="pl" style="left:1px;top:108.2px">320,0</div><div class="pl" style="left:1px;top:120.0px">310,0</div><div class="pl" style="left:1px;top:131.9px">300,0</div><div class="pl" style="left:1px;top:143.8px">290,0</div><div class="pl" style="left:1px;top:155.6px">280,0</div><div class="pl" style="left:1px;top:167.4px">270,0</div><div class="pl" style="left:1px;top:179.3px">260,0</div><div class="pl" style="left:1px;top:191.1px">250,0</div><div class="pl" style="left:1px;top:203.0px">240,0</div><div class="pl" style="left:1px;top:214.8px">230,0</div><div class="pl" style="left:1px;top:226.7px">220,0</div><div class="pl" style="left:1px;top:238.6px">210,0</div><div class="a" style="left:1px;top:195px;width:28px;height:16px;background:#c0c0c0"></div><div class="pl" style="left:1px;top:195.7px">246,5</div></div>
<div class="pl2" style="top:389px">400,0000</div><div class="pl2" style="top:441px">300,0000</div><div class="pl2" style="top:493px">200,0000</div><div class="pl2" style="top:546px">100,0000</div><div class="pl2" style="top:598px">0,0000</div>
<div class="xl" style="left:71px;top:353px">12th</div><div class="xl" style="left:136px;top:353px">22nd</div><div class="xl" style="left:202px;top:353px">30th</div><div class="xl" style="left:268px;top:353px">okt</div><div class="xl" style="left:335px;top:353px">16th</div><div class="xl" style="left:400px;top:353px">24th</div><div class="xl" style="left:466px;top:353px">nov</div><div class="xl" style="left:532px;top:353px">11th</div><div class="xl" style="left:598px;top:353px">19th</div><div class="xl" style="left:664px;top:353px">27th</div><div class="xl" style="left:730px;top:353px">dec</div><div class="xl" style="left:796px;top:353px">15th</div>
<div class="xl" style="left:71px;top:625px">12th</div><div class="xl" style="left:136px;top:625px">22nd</div><div class="xl" style="left:202px;top:625px">30th</div><div class="xl" style="left:268px;top:625px">okt</div><div class="xl" style="left:335px;top:625px">16th</div><div class="xl" style="left:400px;top:625px">24th</div><div class="xl" style="left:466px;top:625px">nov</div><div class="xl" style="left:532px;top:625px">11th</div><div class="xl" style="left:598px;top:625px">19th</div><div class="xl" style="left:664px;top:625px">27th</div><div class="xl" style="left:730px;top:625px">dec</div><div class="xl" style="left:796px;top:625px">15th</div>
<div class="t11" style="left:46px;top:105px;color:#303030;font-size:11.3px">.N25.cfd - Netherlands 25 cash, EUR O=247,4 H=249,5 L=244,8 C=246,5</div>
<div class="t11" style="left:46px;top:371px;font-size:11px"><span style="color:#7474a4">FR=247,3193</span> <span style="color:#800080">UPLevel=258,8000</span> <span style="color:#0000ff">LOLevel=240,2000</span></div>
<!-- chart status bar -->
<div class="a" style="left:32px;top:641px;width:986px;height:19px;background:#eff2f2;border:1px solid #6a8a7a;border-radius:4px"></div>
<div class="t11" style="left:33px;top:643px">FR=309,2843 UPLevel=304,8000 LOLevel=232,9000&nbsp;&nbsp;14.10.08 00:00:00 -5,9306</div>
<div class="a" style="left:872px;top:644px;width:17px;height:15px;background:linear-gradient(#d8ecd8,#a8cca8);border:1px solid #98b898;box-shadow:inset 0 0 0 1px #b8d4b8"><svg width="15" height="13" style="position:absolute;left:0;top:0"><path d="M9,3.5 L5.5,6.5 L9,9.5" fill="none" stroke="#000" stroke-width="2.2"/></svg></div><div class="a" style="left:889px;top:645px;width:37px;height:14px;background:repeating-linear-gradient(45deg,#e4e8e8 0 1px,#f4f6f6 1px 2px)"></div><div class="a" style="left:906px;top:645px;width:16px;height:14px;background:linear-gradient(#fff,#e0ece0);border:1px solid #404040;border-radius:3px"><svg width="14" height="12" style="position:absolute;left:0;top:0"><path d="M3.5,3v6 M5.5,3v6 M7.5,3v6 M9.5,3v6 M11.5,3v6" stroke="#000"/></svg></div><div class="a" style="left:925px;top:644px;width:17px;height:15px;background:linear-gradient(#d8ecd8,#a8cca8);border:1px solid #98b898;box-shadow:inset 0 0 0 1px #b8d4b8"><svg width="15" height="13" style="position:absolute;left:0;top:0"><path d="M6,3.5 L9.5,6.5 L6,9.5" fill="none" stroke="#000" stroke-width="2.2"/></svg></div><svg class="a" style="left:948px;top:646px" width="10" height="11" viewBox="0 0 10 11"><path d="M5,1v9 M0.5,5.5h9" stroke="#000" stroke-width="1"/><path d="M5,0 l-2.5,2.5h5z M5,11 l-2.5,-2.5h5z M0,5.5 l2.5,-2.5v5z M10,5.5 l-2.5,-2.5v5z" fill="#000"/></svg><svg class="a" style="left:966px;top:647px" width="9" height="8" viewBox="0 0 9 8"><path d="M4.5,0v8 M0.5,4h8" stroke="#000" stroke-width="1.2"/></svg><svg class="a" style="left:984px;top:647px" width="9" height="8" viewBox="0 0 9 8"><path d="M0.5,4h8" stroke="#000" stroke-width="1.2"/></svg><svg class="a" style="left:1000px;top:645px" width="14" height="11" viewBox="0 0 14 11"><path d="M4,4 q4,-3 7,-1 q3,2 1,6" fill="none" stroke="#000" stroke-width="1.3"/><path d="M1,2 v5 h5z" fill="#000"/></svg>
<!-- bottom area -->
<div class="a" style="left:3px;top:663px;width:1018px;height:30px;background:#e8eae0"></div>
<div class="a" style="left:4px;top:664px;width:10px;height:10px;background:#f4f1e4;border:1px solid;border-color:#fff #8a8878 #8a8878 #fff;box-shadow:1px 1px #b8b4a4"><svg width="8" height="8" style="position:absolute;left:0;top:0"><path d="M1.5,1.5 L6.5,6.5 M6.5,1.5 L1.5,6.5" stroke="#000" stroke-width="0.9"/></svg></div><div class="a" style="left:6px;top:676px;width:3px;height:13px;border-left:1px solid #fff;border-right:1px solid #a8a898"></div><div class="a" style="left:9px;top:676px;width:3px;height:13px;border-left:1px solid #fff;border-right:1px solid #a8a898"></div>
<div class="a" style="left:19px;top:667px;width:153px;height:19px;background:linear-gradient(#f4a850,#ffe4c0 50%,#f4a850);border:1px solid #404040;box-shadow:inset 0 1px #f4a850,inset 0 2px #fff,inset 0 -1px #f4a850,inset 0 -2px #fff"></div>
<div class="t11" style="left:83px;top:669px;font-size:9.6px">Stocks</div>

<svg class="a" style="left:894px;top:660px" width="124" height="32" viewBox="0 0 124 32">
<path d="M39.5,16 H52.3 A12.8,12.8 0 1,0 39.5,28.8 Z" fill="#1c1c78"/>
<path d="M39.5,3.2 A12.8,12.8 0 0,1 52.3,16 L50.3,16 A10.8,10.8 0 0,0 39.5,5.2 Z" fill="#e02020"/>
<text x="4" y="27.5" font-family="Liberation Sans" font-weight="bold" font-size="13" fill="#1c1c78" textLength="20.5" lengthAdjust="spacingAndGlyphs">WH</text>
<text x="40.5" y="27.5" font-family="Liberation Sans" font-size="17.5" fill="#1c1c78" stroke="#1c1c78" stroke-width="0.35" textLength="72.6" lengthAdjust="spacingAndGlyphs">selfinvest</text>
<circle cx="70.2" cy="15.3" r="1" fill="#e02020"/>
</svg>
<div class="a" style="left:4px;top:692px;width:10px;height:10px;background:#f4f1e4;border:1px solid;border-color:#fff #8a8878 #8a8878 #fff;box-shadow:1px 1px #b8b4a4"><svg width="8" height="8" style="position:absolute;left:0;top:0"><path d="M1.5,1.5 L6.5,6.5 M6.5,1.5 L1.5,6.5" stroke="#000" stroke-width="0.9"/></svg></div><div class="a" style="left:6px;top:704px;width:3px;height:24px;border-left:1px solid #fff;border-right:1px solid #a8a898"></div><div class="a" style="left:9px;top:704px;width:3px;height:24px;border-left:1px solid #fff;border-right:1px solid #a8a898"></div>
<div class="a" style="left:16px;top:693px;width:1003px;height:17px;background:#000"></div>
<div class="a" style="left:327px;top:693px;width:2px;height:17px;background:#ebe9dc"></div>
<div class="a" style="left:19px;top:695px;width:3px;height:13px;background:#f0f0e0"></div>
<div class="a" style="left:331px;top:695px;width:3px;height:13px;background:#f0f0e0"></div>
<div class="t11" style="left:27px;top:693px;color:#fff">16/12/2008 15:53:19 Portfolio modified. Code: 32</div>
<div class="t11" style="left:338px;top:693px;color:#fff;letter-spacing:-0.08px">16/12/2008 15:46:59 (IGM)[JOBS AND HOUSING] On the day of the November jobs report, we noted</div>
<div class="t11" style="left:850px;top:693px;color:#fff">that a half million lost jobs was...</div>
<div class="a" style="left:16px;top:710px;width:1005px;height:19px;background:#eff2f2;border-top:2px solid #fff;border-bottom:1px solid #fff"></div>
<div class="a" style="left:26px;top:712px;width:67px;height:16px;background:#fff;border:1px solid #3a68a0;border-radius:3px"></div><div class="a" style="left:30px;top:714px;width:4px;height:12px;background:#e8e8e8;border:1px solid #d0d0d0"></div><div class="a" style="left:30px;top:723px;width:4px;height:3px;background:#e03030"></div><div class="a" style="left:35px;top:714px;width:4px;height:12px;background:#e8e8e8;border:1px solid #d0d0d0"></div><div class="a" style="left:35px;top:722px;width:4px;height:4px;background:#e03030"></div><div class="a" style="left:40px;top:714px;width:4px;height:12px;background:#e8e8e8;border:1px solid #d0d0d0"></div><div class="a" style="left:40px;top:722px;width:4px;height:4px;background:#e03030"></div><div class="a" style="left:45px;top:714px;width:4px;height:12px;background:#e8e8e8;border:1px solid #d0d0d0"></div><div class="a" style="left:45px;top:721px;width:4px;height:5px;background:#e03030"></div><div class="a" style="left:50px;top:714px;width:4px;height:12px;background:#e8e8e8;border:1px solid #d0d0d0"></div><div class="a" style="left:50px;top:720px;width:4px;height:6px;background:#f0b800"></div><div class="a" style="left:55px;top:714px;width:4px;height:12px;background:#e8e8e8;border:1px solid #d0d0d0"></div><div class="a" style="left:55px;top:719px;width:4px;height:7px;background:#f0b800"></div><div class="a" style="left:60px;top:714px;width:4px;height:12px;background:#e8e8e8;border:1px solid #d0d0d0"></div><div class="a" style="left:60px;top:718px;width:4px;height:8px;background:#f0b800"></div><div class="a" style="left:65px;top:714px;width:4px;height:12px;background:#e8e8e8;border:1px solid #d0d0d0"></div><div class="a" style="left:65px;top:718px;width:4px;height:8px;background:#f0b800"></div><div class="a" style="left:70px;top:714px;width:4px;height:12px;background:#e8e8e8;border:1px solid #d0d0d0"></div><div class="a" style="left:70px;top:717px;width:4px;height:9px;background:#30c030"></div><div class="a" style="left:75px;top:714px;width:4px;height:12px;background:#e8e8e8;border:1px solid #d0d0d0"></div><div class="a" style="left:75px;top:716px;width:4px;height:10px;background:#30c030"></div><div class="a" style="left:80px;top:714px;width:4px;height:12px;background:#e8e8e8;border:1px solid #d0d0d0"></div><div class="a" style="left:80px;top:714px;width:4px;height:12px;background:#30c030"></div><div class="a" style="left:85px;top:714px;width:4px;height:12px;background:#e8e8e8;border:1px solid #d0d0d0"></div><div class="a" style="left:85px;top:714px;width:4px;height:12px;background:#30c030"></div><div class="a" style="left:19px;top:714px;width:4px;height:12px;border-right:1px solid #a8a494;border-bottom:1px solid #a8a494;box-shadow:inset 1px 1px #fff"></div><div class="a" style="left:117px;top:712px;width:1px;height:16px;background:#a8a494"></div><div class="a" style="left:121px;top:714px;width:4px;height:12px;border-right:1px solid #a8a494;border-bottom:1px solid #a8a494;box-shadow:inset 1px 1px #fff"></div><div class="a" style="left:290px;top:712px;width:1px;height:16px;background:#a8a494"></div><div class="a" style="left:294px;top:714px;width:4px;height:12px;border-right:1px solid #a8a494;border-bottom:1px solid #a8a494;box-shadow:inset 1px 1px #fff"></div><div class="a" style="left:486px;top:712px;width:1px;height:16px;background:#a8a494"></div><div class="a" style="left:490px;top:714px;width:4px;height:12px;border-right:1px solid #a8a494;border-bottom:1px solid #a8a494;box-shadow:inset 1px 1px #fff"></div><div class="a" style="left:682px;top:712px;width:1px;height:16px;background:#a8a494"></div><div class="a" style="left:686px;top:714px;width:4px;height:12px;border-right:1px solid #a8a494;border-bottom:1px solid #a8a494;box-shadow:inset 1px 1px #fff"></div><div class="a" style="left:831px;top:712px;width:1px;height:16px;background:#a8a494"></div><div class="a" style="left:835px;top:714px;width:4px;height:12px;border-right:1px solid #a8a494;border-bottom:1px solid #a8a494;box-shadow:inset 1px 1px #fff"></div><div class="a" style="left:986px;top:712px;width:1px;height:16px;background:#a8a494"></div><div class="a" style="left:990px;top:714px;width:4px;height:12px;border-right:1px solid #a8a494;border-bottom:1px solid #a8a494;box-shadow:inset 1px 1px #fff"></div><div class="a" style="left:997px;top:712px;width:1px;height:16px;background:#a8a494"></div><div class="a" style="left:1001px;top:714px;width:4px;height:12px;border-right:1px solid #a8a494;border-bottom:1px solid #a8a494;box-shadow:inset 1px 1px #fff"></div><div class="a" style="left:1008px;top:712px;width:1px;height:16px;background:#a8a494"></div><div class="a" style="left:1012px;top:714px;width:4px;height:12px;border-right:1px solid #a8a494;border-bottom:1px solid #a8a494;box-shadow:inset 1px 1px #fff"></div>
<div class="a" style="left:98px;top:713px;font-size:14px;line-height:14px;color:#20a040">C</div>
<div class="t11" style="left:139px;top:713px">Avl. Equity (EUR): 426.555,66</div>
<div class="t11" style="left:338px;top:713px;letter-spacing:-0.12px">Margin Req (EUR): 30.718,10</div>
<div class="t11" style="left:549px;top:713px;letter-spacing:-0.16px">Unrealized P/L (EUR): 0,00</div>
<div class="t11" style="left:708px;top:713px;letter-spacing:-0.1px">Cash (EUR): 515.697,57</div>
<div class="t11" style="left:842px;top:713px;letter-spacing:-0.05px">oating P/L (EUR): -58.423,81</div>
</body></html>
